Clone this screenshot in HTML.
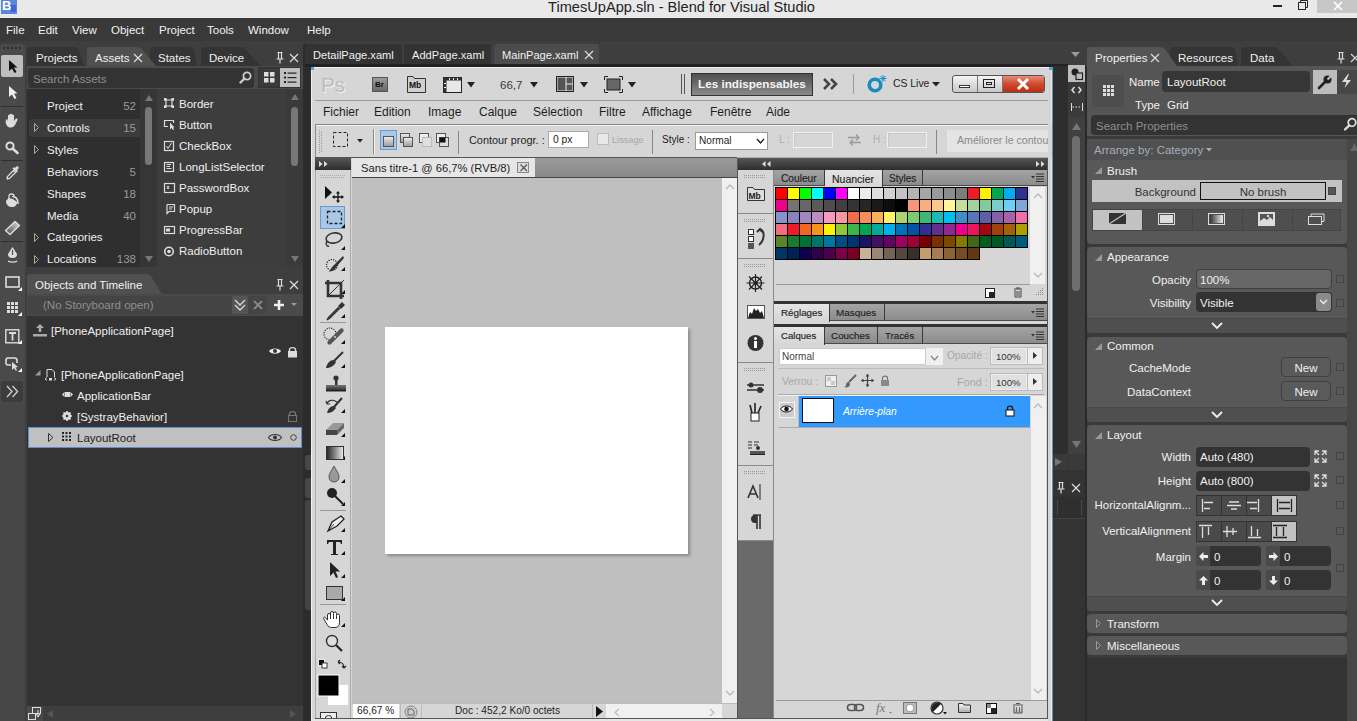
<!DOCTYPE html>
<html><head><meta charset="utf-8">
<style>
*{margin:0;padding:0;box-sizing:border-box}
html,body{width:1357px;height:721px;overflow:hidden;background:#3e3e3e;font-family:"Liberation Sans",sans-serif;position:relative}
.a{position:absolute}
.t{position:absolute;white-space:nowrap;line-height:12px;font-size:11.5px;color:#f0f0f0}
.mi{font-size:11.5px;top:24px;color:#f2f2f2}
svg{position:absolute;overflow:visible}
.ps{font-size:11px;color:#1e1e1e;line-height:12px}
.cat{left:47px}
.num{right:1221px;color:#9a9a9a;text-align:right}
.itm{left:179px}
.plab{text-align:right;right:166px}
</style></head><body>
<!-- ============ TITLE BAR ============ -->
<div class="a" style="left:0;top:0;width:1357px;height:18px;background:#e9e9e9"></div>
<div class="a" style="left:1px;top:0;width:16px;height:14px;background:#5a86e0"></div>
<div class="t" style="left:2px;top:0px;font-size:13px;font-weight:bold;color:#fff">B</div>
<div class="a" style="left:11px;top:5px;width:5px;height:7px;background:#3d6ad0"></div>
<div class="t" style="left:0;width:1363px;text-align:center;top:0px;font-size:14.6px;line-height:14px;color:#222">TimesUpApp.sln - Blend for Visual Studio</div>
<div class="a" style="left:1273px;top:5px;width:9px;height:2px;background:#222"></div>
<svg style="left:1298px;top:0" width="12" height="10"><rect x="0.5" y="2.5" width="7" height="7" fill="none" stroke="#222"/><path d="M2.5 2.5V0.5H9.5V7.5H7.5" fill="none" stroke="#222"/></svg>
<div class="a" style="left:1317px;top:0;width:40px;height:13px;background:#c7c7c7"></div>
<svg style="left:1333px;top:1px" width="10" height="10"><path d="M1 1L9 9M9 1L1 9" stroke="#fff" stroke-width="1.6"/></svg>

<!-- ============ MENU ============ -->
<div class="a" style="left:0;top:18px;width:1357px;height:23px;background:#393939"></div>
<div class="t mi" style="left:6px">File</div>
<div class="t mi" style="left:38px">Edit</div>
<div class="t mi" style="left:72px">View</div>
<div class="t mi" style="left:111px">Object</div>
<div class="t mi" style="left:159px">Project</div>
<div class="t mi" style="left:207px">Tools</div>
<div class="t mi" style="left:248px">Window</div>
<div class="t mi" style="left:307px">Help</div>

<!-- ============ LEFT TOOLBAR ============ -->
<div class="a" style="left:0;top:44px;width:25px;height:677px;background:#4a4a4a;border-radius:3px 3px 0 0"></div>
<svg style="left:3px;top:47px" width="20" height="3"><g fill="#2e2e2e"><rect x="0" y="0" width="2" height="2"/><rect x="4" y="0" width="2" height="2"/><rect x="8" y="0" width="2" height="2"/><rect x="12" y="0" width="2" height="2"/><rect x="16" y="0" width="2" height="2"/></g></svg>
<div class="a" style="left:1px;top:55px;width:22px;height:22px;background:#bdbdbd;border-radius:2px"></div>
<svg style="left:9px;top:60px" width="9" height="14"><path d="M0 0L0 11L3 8.5L5.5 13L7.5 12L5 7.5L8.5 7.5Z" fill="#111"/></svg>
<svg style="left:9px;top:86px" width="9" height="14"><path d="M0 0L0 11L3 8.5L5.5 13L7.5 12L5 7.5L8.5 7.5Z" fill="#eee"/></svg>
<div class="a" style="left:1px;top:106px;width:22px;height:1px;background:#303030"></div>
<svg style="left:5px;top:113px" width="15" height="15"><path d="M3 14C1 12 0 9 1 7L2 5.5L3 8V2.5C3 1.5 4.5 1.5 4.5 2.5V7V1.5C4.5 0.5 6 0.5 6 1.5V7V1.5C6 0.5 7.5 0.5 7.5 1.5V7V2.5C7.5 1.5 9 1.5 9 2.5V8L10.5 6C11.5 5 13 6 12.5 7L10 12C9 14 7 14.5 5 14.5Z" fill="#ddd"/></svg>
<svg style="left:5px;top:141px" width="14" height="13"><circle cx="5" cy="5" r="3.6" fill="none" stroke="#ddd" stroke-width="2"/><path d="M7.5 7.5L12.5 12" stroke="#ddd" stroke-width="2.6" stroke-linecap="round"/></svg>
<div class="a" style="left:1px;top:160px;width:22px;height:1px;background:#303030"></div>
<svg style="left:6px;top:166px" width="14" height="14"><path d="M10.5 0.5C11.5 -0.5 13.5 1.5 12.5 2.5L11 4L12 5L10.5 6.5L6.5 2.5L8 1L9 2Z" fill="#ddd"/><path d="M7.5 4.5L9.5 6.5L3.5 12.5L1.5 13L1 12.5L1.5 10.5Z" fill="none" stroke="#ddd" stroke-width="1.3"/></svg>
<svg style="left:5px;top:193px" width="15" height="16"><path d="M1 8C1 12 4 14 7 14C10 14 12 12 12 9L8 6L3.5 5Z" fill="#ddd"/><path d="M4 8V3C4 1.5 5 1 6.5 1C8 1 9 1.5 9 3" fill="none" stroke="#ddd" stroke-width="1.3"/><path d="M7 4C9 3 11.5 4.5 12.5 7L13 11" fill="none" stroke="#ddd" stroke-width="1.6"/><path d="M6 3.5L10 6.5" stroke="#4a4a4a" stroke-width="1"/></svg>
<svg style="left:4px;top:220px" width="17" height="16"><defs><linearGradient id="er" x1="0" y1="1" x2="1" y2="0"><stop offset="0" stop-color="#444"/><stop offset="1" stop-color="#ddd"/></linearGradient></defs><path d="M11 1.5L15.5 5.5L6 14.5L1.5 10.5Z" fill="url(#er)" stroke="#ddd" stroke-width="1.4" stroke-linejoin="round"/></svg>
<div class="a" style="left:1px;top:241px;width:22px;height:1px;background:#303030"></div>
<svg style="left:7px;top:247px" width="11" height="17"><path d="M5.5 0L10 7C10 10 8 11 5.5 11C3 11 1 10 1 7Z" fill="#ddd"/><path d="M5.5 3V8" stroke="#4a4a4a" stroke-width="1.2"/><path d="M1 14C3 15.5 8 15.5 10 14" fill="none" stroke="#ddd" stroke-width="1.2"/></svg>
<svg style="left:5px;top:276px" width="18" height="16"><rect x="1" y="1" width="13" height="10" fill="none" stroke="#ddd" stroke-width="1.6"/><path d="M17 11L17 15L13 15Z" fill="#fff"/></svg>
<svg style="left:7px;top:302px" width="16" height="16"><g fill="#ddd"><rect x="0" y="0" width="3" height="3"/><rect x="4" y="0" width="3" height="3"/><rect x="8" y="0" width="3" height="3"/><rect x="0" y="4" width="3" height="3"/><rect x="4" y="4" width="3" height="3"/><rect x="8" y="4" width="3" height="3"/><rect x="0" y="8" width="3" height="3"/><rect x="4" y="8" width="3" height="3"/><rect x="8" y="8" width="3" height="3"/></g><path d="M15 10L15 14L11 14Z" fill="#fff"/></svg>
<svg style="left:5px;top:329px" width="18" height="16"><rect x="0.8" y="0.8" width="13" height="13" fill="none" stroke="#ddd" stroke-width="1.4"/><path d="M4 4H11M7.5 4V11.5" stroke="#ddd" stroke-width="1.8"/><path d="M17 11L17 15L13 15Z" fill="#fff"/></svg>
<svg style="left:5px;top:357px" width="18" height="16"><path d="M12 6V3.5C12 2 11 1 9.5 1H3C1.8 1 1 2 1 3.5V6C1 7.5 1.8 8 3 8H6" fill="none" stroke="#ddd" stroke-width="1.6"/><path d="M7 5L7 13L9 11L11 14L12 13L10.5 10.5L13 10Z" fill="#ddd"/><path d="M17 11L17 15L13 15Z" fill="#fff"/></svg>
<div class="a" style="left:1px;top:381px;width:22px;height:21px;background:#3c3c3c;border-radius:2px"></div>
<svg style="left:6px;top:385px" width="14" height="13"><path d="M1 1L6 6.5L1 12M6.5 1L11.5 6.5L6.5 12" fill="none" stroke="#ccc" stroke-width="1.4"/></svg>
<div class="a" style="left:0;top:403px;width:25px;height:318px;background:#474747"></div>

<!-- ============ ASSETS PANEL ============ -->
<!-- tabs -->
<svg style="left:27px;top:47px" width="250" height="20"><path d="M0 20V3Q0 0 3 0H45Q49 0 51 2L57 18Q59 20 62 20Z" fill="#343434"/><path d="M123 20V3Q123 0 126 0H161Q165 0 167 2L170 18Q172 20 175 20Z" fill="#343434"/><path d="M174 20V3Q174 0 177 0H212Q216 0 218 2L233 18Q235 20 238 20Z" fill="#343434"/><path d="M60 20V3Q60 0 63 0H109Q113 0 115 2L128 18Q130 20 133 20Z" fill="#505050"/></svg>
<div class="a" style="left:27px;top:66px;width:276px;height:201px;background:#4a4a4a"></div>
<div class="t" style="left:36px;top:52px">Projects</div>
<div class="t" style="left:95px;top:52px">Assets</div>
<svg style="left:133px;top:53px" width="10" height="10"><path d="M1 1L9 9M9 1L1 9" stroke="#ddd" stroke-width="1.2"/></svg>
<div class="t" style="left:158px;top:52px">States</div>
<div class="t" style="left:209px;top:52px">Device</div>
<svg style="left:276px;top:52px" width="8" height="12"><path d="M1.5 0.5H6.5M2.5 0.5V7M5.5 0.5V7M0.5 7H7.5M4 7V11.5" stroke="#ddd" stroke-width="1.2" fill="none"/></svg>
<svg style="left:289px;top:53px" width="10" height="10"><path d="M1 1L9 9M9 1L1 9" stroke="#ddd" stroke-width="1.2"/></svg>
<div class="a" style="left:28px;top:68px;width:226px;height:20px;background:#333;border-radius:3px"></div>
<div class="t" style="left:33px;top:73px;color:#8e8e8e">Search Assets</div>
<svg style="left:239px;top:71px" width="13" height="13"><circle cx="8" cy="5" r="3.6" fill="none" stroke="#ccc" stroke-width="1.8"/><path d="M5.5 7.5L1.5 11.5" stroke="#ccc" stroke-width="2.4" stroke-linecap="round"/></svg>
<div class="a" style="left:258px;top:67px;width:43px;height:21px;background:#3a3a3a;border:1px solid #333"></div>
<div class="a" style="left:280px;top:68px;width:20px;height:19px;background:#c0c0c0"></div>
<svg style="left:264px;top:72px" width="12" height="12"><g fill="#ddd"><rect x="0" y="0" width="4.5" height="4.5"/><rect x="6" y="0" width="4.5" height="4.5"/><rect x="0" y="6" width="4.5" height="4.5"/><rect x="6" y="6" width="4.5" height="4.5"/></g></svg>
<svg style="left:284px;top:72px" width="13" height="12"><g fill="#222"><rect x="0" y="0" width="2" height="2"/><rect x="0" y="4.5" width="2" height="2"/><rect x="0" y="9" width="2" height="2"/><rect x="3.5" y="0.5" width="9" height="1.2"/><rect x="3.5" y="5" width="9" height="1.2"/><rect x="3.5" y="9.5" width="9" height="1.2"/></g></svg>
<!-- lists -->
<div class="a" style="left:27px;top:89px;width:113px;height:178px;background:#2f2f2f"></div>
<div class="a" style="left:140px;top:89px;width:17px;height:178px;background:#363636"></div>
<div class="a" style="left:157px;top:89px;width:146px;height:178px;background:#3d3d3d"></div>
<div class="a" style="left:286px;top:89px;width:17px;height:178px;background:#3a3a3a"></div>
<div class="a" style="left:29px;top:119px;width:111px;height:18px;background:#3c3c3c;border-radius:3px 0 0 3px"></div>
<svg style="left:145px;top:95px" width="8" height="7"><path d="M0 6L4 0L8 6Z" fill="#777"/></svg>
<div class="a" style="left:145px;top:107px;width:7px;height:58px;background:#777;border-radius:4px"></div>
<svg style="left:145px;top:256px" width="8" height="7"><path d="M0 0L4 6L8 0Z" fill="#777"/></svg>
<svg style="left:291px;top:94px" width="8" height="7"><path d="M0 6L4 0L8 6Z" fill="#777"/></svg>
<div class="a" style="left:291px;top:107px;width:7px;height:59px;background:#777;border-radius:4px"></div>
<svg style="left:291px;top:256px" width="8" height="7"><path d="M0 0L4 6L8 0Z" fill="#777"/></svg>
<div class="t cat" style="top:100px">Project</div><div class="t num" style="top:100px">52</div>
<div class="t cat" style="top:122px">Controls</div><div class="t num" style="top:122px">15</div>
<div class="t cat" style="top:144px">Styles</div>
<div class="t cat" style="top:166px">Behaviors</div><div class="t num" style="top:166px">5</div>
<div class="t cat" style="top:188px">Shapes</div><div class="t num" style="top:188px">18</div>
<div class="t cat" style="top:210px">Media</div><div class="t num" style="top:210px">40</div>
<div class="t cat" style="top:231px">Categories</div>
<div class="t cat" style="top:253px">Locations</div><div class="t num" style="top:253px">138</div>
<svg style="left:34px;top:0" width="6" height="270"><g fill="none" stroke="#aaa" stroke-width="1"><path d="M0.5 123.5V131.5L4.5 127.5Z"/><path d="M0.5 145.5V153.5L4.5 149.5Z"/><path d="M0.5 233.5V241.5L4.5 237.5Z"/><path d="M0.5 255.5V263.5L4.5 259.5Z"/></g></svg>
<div class="t itm" style="top:98px">Border</div>
<div class="t itm" style="top:119px">Button</div>
<div class="t itm" style="top:140px">CheckBox</div>
<div class="t itm" style="top:161px">LongListSelector</div>
<div class="t itm" style="top:182px">PasswordBox</div>
<div class="t itm" style="top:203px">Popup</div>
<div class="t itm" style="top:224px">ProgressBar</div>
<div class="t itm" style="top:245px">RadioButton</div>
<svg style="left:164px;top:98px" width="12" height="160" fill="none" stroke="#ddd" stroke-width="1.2">
<path d="M2 1V9M8 1V9M0 2H10M0 8H10"/><rect x="0" y="0" width="2.5" height="2.5" fill="#ddd" stroke="none"/><rect x="7.5" y="0" width="2.5" height="2.5" fill="#ddd" stroke="none"/><rect x="0" y="7.5" width="2.5" height="2.5" fill="#ddd" stroke="none"/><rect x="7.5" y="7.5" width="2.5" height="2.5" fill="#ddd" stroke="none"/>
<path d="M4 28.5H0.5V22.5H9.5V25"/><path d="M6 24.5V31.5L7.5 30L9 32L10 31.5L9 29.5L10.5 29.5Z" fill="#ddd" stroke="none"/>
<rect x="0.5" y="43.5" width="9" height="9"/><path d="M2.5 48L4 50.5L7.5 45" stroke-width="1"/>
<rect x="0.5" y="64.5" width="9" height="9"/><path d="M2.5 66.5H7M2.5 68.5H6M2.5 70.5H7.5" stroke-width="1"/>
<rect x="0.5" y="85.5" width="10" height="9"/><path d="M3 88L5 91M5 88L3 91" stroke-width="1"/>
<path d="M3 106.5H10.5V113.5H5L3 115.5V106.5" /><path d="M5 109H9M5 111H8" stroke-width="1"/>
<rect x="0.5" y="128.5" width="10" height="7"/><rect x="2" y="130.5" width="4" height="3" fill="#ddd" stroke="none"/>
<circle cx="5" cy="153.5" r="4.3" stroke-width="1.6"/><circle cx="5" cy="153.5" r="1.8" fill="#ddd" stroke="none"/>
</svg>

<!-- ============ OBJECTS AND TIMELINE ============ -->
<svg style="left:27px;top:274px" width="276" height="21"><path d="M0 21V3Q0 0 3 0H118Q122 0 124 2L134 19Q136 21 139 21Z" fill="#505050"/></svg>
<div class="t" style="left:35px;top:279px">Objects and Timeline</div>
<svg style="left:276px;top:279px" width="8" height="12"><path d="M1.5 0.5H6.5M2.5 0.5V7M5.5 0.5V7M0.5 7H7.5M4 7V11.5" stroke="#ddd" stroke-width="1.2" fill="none"/></svg>
<svg style="left:289px;top:280px" width="10" height="10"><path d="M1 1L9 9M9 1L1 9" stroke="#ddd" stroke-width="1.2"/></svg>
<div class="a" style="left:27px;top:294px;width:276px;height:22px;background:#4a4a4a"></div>
<div class="a" style="left:28px;top:296px;width:222px;height:19px;background:#444;border-radius:3px"></div>
<div class="t" style="left:43px;top:299px;color:#8e8e8e">(No Storyboard open)</div>
<div class="a" style="left:232px;top:296px;width:16px;height:18px;background:#555;border-radius:2px"></div>
<svg style="left:234px;top:299px" width="12" height="12"><path d="M1 1L6 6L11 1M1 6L6 11L11 6" fill="none" stroke="#ddd" stroke-width="1.3"/></svg>
<div class="a" style="left:249px;top:296px;width:17px;height:18px;background:#444;border-radius:2px"></div>
<svg style="left:253px;top:300px" width="10" height="10"><path d="M1 1L9 9M9 1L1 9" stroke="#888" stroke-width="1.8"/></svg>
<svg style="left:274px;top:300px" width="11" height="11"><path d="M5 0V10M0 5H10" stroke="#eee" stroke-width="2.6"/></svg>
<svg style="left:291px;top:303px" width="6" height="4"><path d="M0 0H6L3 3Z" fill="#999"/></svg>
<div class="a" style="left:27px;top:316px;width:276px;height:390px;background:#333"></div>
<svg style="left:33px;top:324px" width="14" height="13"><path d="M7 0L11 4H8.3V8H5.7V4H3Z" fill="#aaa"/><rect x="0" y="10" width="14" height="2.5" fill="#aaa"/></svg>
<div class="t" style="left:51px;top:325px">[PhoneApplicationPage]</div>
<svg style="left:269px;top:347px" width="12" height="8"><path d="M0 4C2 0.5 10 0.5 12 4C10 7.5 2 7.5 0 4Z" fill="#eee"/><circle cx="6" cy="4" r="2" fill="#333"/></svg>
<svg style="left:287px;top:346px" width="11" height="12"><path d="M2.5 5V3.5C2.5 1 8.5 1 8.5 3.5V5" fill="none" stroke="#ddd" stroke-width="1.4"/><rect x="1" y="5" width="9" height="6.5" fill="#ddd"/></svg>
<svg style="left:35px;top:370px" width="6" height="6"><path d="M5.5 0V5.5H0Z" fill="#999"/></svg>
<svg style="left:45px;top:369px" width="12" height="13"><path d="M2 8V0.5H7L9.5 3V8" fill="none" stroke="#ddd" stroke-width="1"/><path d="M0 10L2 8.5M0 10L2 11.5M11 10L9 8.5M11 10L9 11.5" stroke="#ddd" stroke-width="0.9"/><rect x="4" y="9" width="3" height="2.5" fill="#ddd"/></svg>
<div class="t" style="left:61px;top:369px">[PhoneApplicationPage]</div>
<svg style="left:62px;top:391px" width="11" height="7"><path d="M0 3.5L2 1.5V5.5Z" fill="#ddd"/><rect x="2.5" y="1" width="6" height="5" fill="#ddd"/><path d="M11 3.5L9 1.5V5.5Z" fill="#ddd"/></svg>
<div class="t" style="left:77px;top:390px">ApplicationBar</div>
<svg style="left:62px;top:411px" width="10" height="10"><circle cx="5" cy="5" r="3" fill="none" stroke="#ddd" stroke-width="2"/><path d="M5 0V10M0 5H10M1.5 1.5L8.5 8.5M8.5 1.5L1.5 8.5" stroke="#ddd" stroke-width="1.6"/><circle cx="5" cy="5" r="1.3" fill="#333"/></svg>
<div class="t" style="left:77px;top:411px">[SystrayBehavior]</div>
<svg style="left:287px;top:410px" width="11" height="12"><path d="M2.5 5V3.5C2.5 1 8.5 1 8.5 3.5V5" fill="none" stroke="#777" stroke-width="1.2"/><rect x="1.5" y="5.5" width="8" height="6" fill="none" stroke="#777"/></svg>
<div class="a" style="left:28px;top:427px;width:274px;height:21px;background:#c0c0c0;border:1px solid #5b8ad6"></div>
<svg style="left:48px;top:433px" width="6" height="10"><path d="M0.5 0.5V8.5L5 4.5Z" fill="none" stroke="#333"/></svg>
<svg style="left:62px;top:432px" width="9" height="9"><g fill="#222"><rect x="0" y="0" width="2" height="2"/><rect x="3.5" y="0" width="2" height="2"/><rect x="7" y="0" width="2" height="2"/><rect x="0" y="3.5" width="2" height="2"/><rect x="3.5" y="3.5" width="2" height="2"/><rect x="7" y="3.5" width="2" height="2"/><rect x="0" y="7" width="2" height="2"/><rect x="3.5" y="7" width="2" height="2"/><rect x="7" y="7" width="2" height="2"/></g></svg>
<div class="t" style="left:77px;top:432px;color:#222">LayoutRoot</div>
<svg style="left:268px;top:433px" width="14" height="9"><path d="M0.5 4.5C3 0.5 11 0.5 13.5 4.5C11 8.5 3 8.5 0.5 4.5Z" fill="none" stroke="#333" stroke-width="1.1"/><circle cx="7" cy="4.5" r="2" fill="#333"/></svg>
<svg style="left:290px;top:434px" width="7" height="7"><circle cx="3.5" cy="3.5" r="2.8" fill="none" stroke="#444"/></svg>
<!-- bottom scroll -->
<div class="a" style="left:27px;top:706px;width:276px;height:15px;background:#3e3e3e"></div>
<div class="a" style="left:27px;top:706px;width:16px;height:15px;background:#4a4a4a"></div>
<svg style="left:28px;top:707px" width="14" height="13"><rect x="4.5" y="0.5" width="8" height="6" fill="none" stroke="#ddd"/><rect x="0.5" y="6.5" width="7" height="6" fill="#4a4a4a" stroke="#ddd"/><path d="M10 3V9M8 7L10 10L12 7" stroke="#ddd" fill="none"/></svg>
<svg style="left:47px;top:710px" width="6" height="8"><path d="M6 0V8L0 4Z" fill="#555"/></svg>
<svg style="left:290px;top:710px" width="6" height="8"><path d="M0 0V8L6 4Z" fill="#555"/></svg>
<div class="a" style="left:303px;top:44px;width:8px;height:677px;background:#2c2c2c"></div>
<div class="a" style="left:305px;top:455px;width:6px;height:15px;background:#474747;border-radius:3px 0 0 3px"></div><div class="a" style="left:305px;top:478px;width:6px;height:20px;background:#474747;border-radius:3px 0 0 3px"></div><div class="a" style="left:305px;top:500px;width:6px;height:110px;background:#444;border-radius:3px 0 0 3px"></div>

<!-- ============ DOC TABS ============ -->
<div class="a" style="left:305px;top:44px;width:160px;height:20px;background:#333;border-radius:3px 3px 0 0;width:97px"></div>
<div class="a" style="left:404px;top:44px;width:87px;height:20px;background:#333;border-radius:3px 3px 0 0"></div>
<div class="a" style="left:494px;top:44px;width:105px;height:21px;background:#4c4c4c;border-radius:3px 3px 0 0"></div>
<div class="t" style="left:313px;top:49px;font-size:11.1px">DetailPage.xaml</div>
<div class="t" style="left:412px;top:49px;font-size:11.1px">AddPage.xaml</div>
<div class="t" style="left:502px;top:49px;font-size:11.1px">MainPage.xaml</div>
<svg style="left:584px;top:50px" width="10" height="10"><path d="M1 1L9 9M9 1L1 9" stroke="#ddd" stroke-width="1.2"/></svg>
<div class="a" style="left:305px;top:64px;width:763px;height:3px;background:#222"></div>
<svg style="left:1071px;top:52px" width="9" height="6"><path d="M0 0H9L4.5 5Z" fill="#999"/></svg>

<!-- ============ RIGHT STRIP ============ -->
<div class="a" style="left:1052px;top:66px;width:16px;height:388px;background:#2e2e2e"></div>
<div class="a" style="left:1068px;top:66px;width:18px;height:388px;background:#3a3a3a"></div>
<div class="a" style="left:1068px;top:65px;width:17px;height:17px;background:#bdbdbd"></div>
<svg style="left:1071px;top:68px" width="12" height="12"><circle cx="4" cy="4" r="3.5" fill="#222"/><rect x="5" y="5" width="6.5" height="6.5" fill="#bdbdbd" stroke="#222" stroke-width="1.2"/></svg>
<svg style="left:1071px;top:86px" width="11" height="8"><path d="M3.5 1L1 4L3.5 7M7.5 1L10 4L7.5 7" fill="none" stroke="#ddd" stroke-width="1.5"/></svg>
<svg style="left:1071px;top:103px" width="12" height="8"><path d="M1.5 4H10.5" stroke="#ddd" stroke-width="1" stroke-dasharray="1.5 1.5"/><path d="M0.5 0V8M11.5 0V8" stroke="#ddd" stroke-width="1"/></svg>
<div class="a" style="left:1068px;top:117px;width:18px;height:337px;background:#404040"></div>
<svg style="left:1072px;top:123px" width="9" height="7"><path d="M0 7L4.5 0L9 7Z" fill="#777"/></svg>
<div class="a" style="left:1072px;top:136px;width:8px;height:155px;background:#6e6e6e;border-radius:4px"></div>
<svg style="left:1072px;top:441px" width="9" height="7"><path d="M0 0L4.5 7L9 0Z" fill="#777"/></svg>
<div class="a" style="left:1052px;top:454px;width:34px;height:16px;background:#3a3a3a"></div>
<svg style="left:1055px;top:458px" width="7" height="8"><path d="M0 0V8L7 4Z" fill="#777"/></svg>
<div class="a" style="left:1068px;top:454px;width:1px;height:16px;background:#333"></div>
<div class="a" style="left:1052px;top:470px;width:34px;height:251px;background:#333"></div>
<svg style="left:1057px;top:482px" width="8" height="12"><path d="M1.5 0.5H6.5M2.5 0.5V7M5.5 0.5V7M0.5 7H7.5M4 7V11.5" stroke="#ddd" stroke-width="1.2" fill="none"/></svg>
<svg style="left:1071px;top:483px" width="10" height="10"><path d="M1 1L9 9M9 1L1 9" stroke="#ddd" stroke-width="1.2"/></svg>
<div class="a" style="left:1053px;top:497px;width:32px;height:22px;background:#2f2f2f;border-bottom:1px solid #444"></div>
<div class="a" style="left:1057px;top:500px;width:1px;height:15px;background:#484848"></div>
<div class="a" style="left:1081px;top:500px;width:1px;height:15px;background:#484848"></div>
<div class="a" style="left:1085px;top:66px;width:2px;height:655px;background:#2a2a2a"></div>

<!-- ============ PROPERTIES PANEL ============ -->
<svg style="left:1087px;top:47px" width="270" height="20"><path d="M83 20V3Q83 0 86 0H142Q146 0 148 2L151 18Q153 20 156 20Z" fill="#343434"/><path d="M154 20V3Q154 0 157 0H185Q189 0 191 2L205 18Q207 20 210 20Z" fill="#343434"/><path d="M0 20V3Q0 0 3 0H72Q76 0 78 2L89 18Q91 20 94 20Z" fill="#555"/></svg>
<div class="a" style="left:1087px;top:66px;width:270px;height:74px;background:#555"></div>
<div class="t" style="left:1095px;top:52px">Properties</div>
<svg style="left:1150px;top:53px" width="10" height="10"><path d="M1 1L9 9M9 1L1 9" stroke="#ddd" stroke-width="1.2"/></svg>
<div class="t" style="left:1178px;top:52px">Resources</div>
<div class="t" style="left:1250px;top:52px">Data</div>
<svg style="left:1337px;top:52px" width="8" height="12"><path d="M1.5 0.5H6.5M2.5 0.5V7M5.5 0.5V7M0.5 7H7.5M4 7V11.5" stroke="#ddd" stroke-width="1.2" fill="none"/></svg>
<svg style="left:1350px;top:53px" width="10" height="10"><path d="M1 1L9 9M9 1L1 9" stroke="#ddd" stroke-width="1.2"/></svg>
<div class="a" style="left:1092px;top:75px;width:32px;height:32px;background:#4d4d4d"></div>
<svg style="left:1103px;top:85px" width="11" height="11"><g fill="#ddd"><rect x="0" y="0" width="3" height="3"/><rect x="4" y="0" width="3" height="3"/><rect x="8" y="0" width="3" height="3"/><rect x="0" y="4" width="3" height="3"/><rect x="4" y="4" width="3" height="3"/><rect x="8" y="4" width="3" height="3"/><rect x="0" y="8" width="3" height="3"/><rect x="4" y="8" width="3" height="3"/><rect x="8" y="8" width="3" height="3"/></g></svg>
<div class="t" style="left:1129px;top:76px">Name</div>
<div class="a" style="left:1162px;top:71px;width:148px;height:21px;background:#363636;border-radius:4px"></div>
<div class="t" style="left:1167px;top:76px">LayoutRoot</div>
<div class="a" style="left:1313px;top:70px;width:24px;height:24px;background:#bdbdbd"></div>
<svg style="left:1317px;top:74px" width="16" height="16"><path d="M2 14L8 8" stroke="#222" stroke-width="2.6" stroke-linecap="round"/><circle cx="10.5" cy="5.5" r="4" fill="#222"/><path d="M10.5 5.5L14 2" stroke="#bdbdbd" stroke-width="2.2"/></svg>
<div class="a" style="left:1337px;top:70px;width:20px;height:24px;background:#474747"></div>
<svg style="left:1341px;top:74px" width="12" height="15"><path d="M7 0L1 8H5.5L3.5 14L10 6H5.5L8 0Z" fill="#ddd"/></svg>
<div class="t" style="left:1135px;top:99px">Type</div>
<div class="t" style="left:1167px;top:99px">Grid</div>
<div class="a" style="left:1091px;top:115px;width:266px;height:20px;background:#333;border-radius:4px 0 0 4px"></div>
<div class="t" style="left:1096px;top:120px;color:#8e8e8e">Search Properties</div>
<svg style="left:1343px;top:117px" width="14" height="14"><circle cx="9" cy="5.5" r="3.8" fill="none" stroke="#ddd" stroke-width="1.8"/><path d="M6.3 8.3L2 12.5" stroke="#ddd" stroke-width="2.4" stroke-linecap="round"/></svg>
<div class="a" style="left:1087px;top:136px;width:270px;height:585px;background:#3a3a3a"></div>
<div class="a" style="left:1347px;top:139px;width:10px;height:582px;background:#474747"></div>
<svg style="left:1350px;top:143px" width="9" height="8"><path d="M0 8L4.5 0L9 8Z" fill="#666"/></svg>
<div class="a" style="left:1087px;top:139px;width:260px;height:21px;background:#505050"></div>
<div class="t" style="left:1094px;top:144px;color:#a5adb8">Arrange by: Category</div>
<svg style="left:1206px;top:148px" width="6" height="4"><path d="M0 0H6L3 3.5Z" fill="#a5adb8"/></svg>

<!-- Brush -->
<div class="a" style="left:1087px;top:160px;width:260px;height:84px;background:#585858;border-radius:0 0 4px 4px"></div>
<svg style="left:1095px;top:167px" width="8" height="8"><path d="M7 0V7H0Z" fill="#999"/></svg>
<div class="t" style="left:1107px;top:165px">Brush</div>
<div class="a" style="left:1092px;top:180px;width:250px;height:22px;background:#c2c2c2"></div>
<div class="t plab" style="top:186px;color:#333;right:161px">Background</div>
<div class="a" style="left:1200px;top:182px;width:126px;height:18px;border:1px solid #111"></div>
<div class="t" style="left:1200px;width:126px;text-align:center;top:186px;color:#333">No brush</div>
<div class="a" style="left:1328px;top:187px;width:8px;height:8px;background:#555;border:1px solid #444"></div>
<div class="a" style="left:1092px;top:209px;width:249px;height:22px;background:#4f4f4f;border:1px solid #444"></div>
<div class="a" style="left:1093px;top:210px;width:49px;height:20px;background:#c2c2c2"></div>
<div class="a" style="left:1142px;top:210px;width:1px;height:20px;background:#444"></div>
<div class="a" style="left:1192px;top:210px;width:1px;height:20px;background:#444"></div>
<div class="a" style="left:1242px;top:210px;width:1px;height:20px;background:#444"></div>
<div class="a" style="left:1292px;top:210px;width:1px;height:20px;background:#444"></div>
<svg style="left:1109px;top:213px" width="17" height="11"><rect x="0" y="0" width="17" height="11" fill="#333"/><path d="M0 11L17 0" stroke="#c2c2c2" stroke-width="1.3"/></svg>
<svg style="left:1158px;top:213px" width="17" height="12"><rect x="0.5" y="0.5" width="16" height="11" fill="none" stroke="#ddd"/><rect x="2" y="2" width="13" height="8" fill="#ddd"/></svg>
<svg style="left:1208px;top:213px" width="17" height="12"><defs><linearGradient id="g1"><stop offset="0" stop-color="#333"/><stop offset="1" stop-color="#eee"/></linearGradient></defs><rect x="0.5" y="0.5" width="16" height="11" fill="none" stroke="#ddd"/><rect x="2" y="2" width="13" height="8" fill="url(#g1)"/></svg>
<svg style="left:1258px;top:212px" width="17" height="14"><rect x="0" y="0" width="17" height="14" fill="#ddd"/><rect x="2" y="2" width="13" height="8" fill="#555"/><path d="M2 9L6 6L9 8L12 5L15 8V10H2Z" fill="#ddd"/><circle cx="10" cy="4" r="1.2" fill="#ddd"/></svg>
<svg style="left:1308px;top:213px" width="17" height="12"><rect x="0.5" y="3.5" width="13" height="8" fill="none" stroke="#ddd"/><path d="M3 3.5V1H16V8.5H13.5" fill="none" stroke="#ddd"/></svg>

<!-- Appearance -->
<div class="a" style="left:1087px;top:247px;width:260px;height:86px;background:#585858;border-radius:4px"></div>
<svg style="left:1095px;top:254px" width="8" height="8"><path d="M7 0V7H0Z" fill="#999"/></svg>
<div class="t" style="left:1107px;top:251px">Appearance</div>
<div class="t plab" style="top:274px">Opacity</div>
<div class="a" style="left:1196px;top:269px;width:136px;height:20px;background:#666;border:1px solid #3f3f3f;border-radius:4px"></div>
<div class="t" style="left:1200px;top:274px">100%</div>
<div class="a" style="left:1336px;top:275px;width:8px;height:8px;border:1px solid #444"></div>
<div class="t plab" style="top:297px">Visibility</div>
<div class="a" style="left:1196px;top:292px;width:136px;height:20px;background:#333;border-radius:4px"></div>
<div class="a" style="left:1316px;top:293px;width:15px;height:18px;background:#8a8a8a;border-radius:3px"></div>
<svg style="left:1319px;top:299px" width="9" height="6"><path d="M1 1L4.5 4.5L8 1" fill="none" stroke="#eee" stroke-width="1.4"/></svg>
<div class="t" style="left:1200px;top:297px">Visible</div>
<div class="a" style="left:1336px;top:299px;width:8px;height:8px;border:1px solid #444"></div>
<div class="a" style="left:1087px;top:318px;width:260px;height:15px;background:#4f4f4f;border-top:1px solid #484848;border-radius:0 0 4px 4px"></div>
<svg style="left:1211px;top:322px" width="12" height="8"><path d="M1 1L6 6L11 1" fill="none" stroke="#eee" stroke-width="1.8"/></svg>

<!-- Common -->
<div class="a" style="left:1087px;top:337px;width:260px;height:85px;background:#585858;border-radius:4px"></div>
<svg style="left:1095px;top:343px" width="8" height="8"><path d="M7 0V7H0Z" fill="#999"/></svg>
<div class="t" style="left:1107px;top:340px">Common</div>
<div class="t plab" style="top:362px">CacheMode</div>
<div class="a" style="left:1281px;top:357px;width:50px;height:20px;border:1px solid #3f3f3f;border-radius:4px;background:#5a5a5a"></div>
<div class="t" style="left:1281px;width:50px;text-align:center;top:362px">New</div>
<div class="a" style="left:1336px;top:363px;width:8px;height:8px;border:1px solid #444"></div>
<div class="t plab" style="top:386px">DataContext</div>
<div class="a" style="left:1281px;top:381px;width:50px;height:20px;border:1px solid #3f3f3f;border-radius:4px;background:#5a5a5a"></div>
<div class="t" style="left:1281px;width:50px;text-align:center;top:386px">New</div>
<div class="a" style="left:1336px;top:387px;width:8px;height:8px;border:1px solid #444"></div>
<div class="a" style="left:1087px;top:407px;width:260px;height:15px;background:#4f4f4f;border-top:1px solid #484848;border-radius:0 0 4px 4px"></div>
<svg style="left:1211px;top:411px" width="12" height="8"><path d="M1 1L6 6L11 1" fill="none" stroke="#eee" stroke-width="1.8"/></svg>

<!-- Layout -->
<div class="a" style="left:1087px;top:425px;width:260px;height:186px;background:#585858;border-radius:4px"></div>
<svg style="left:1095px;top:432px" width="8" height="8"><path d="M7 0V7H0Z" fill="#999"/></svg>
<div class="t" style="left:1107px;top:429px">Layout</div>
<div class="t plab" style="top:451px">Width</div>
<div class="a" style="left:1196px;top:447px;width:114px;height:20px;background:#333;border-radius:4px"></div>
<div class="t" style="left:1200px;top:451px">Auto (480)</div>
<svg style="left:1314px;top:450px" width="13" height="13"><path d="M1 5V1H5M1 1L5 5M12 8V12H8M12 12L8 8M8 1H12V5M12 1L8 5M5 12H1V8M1 12L5 8" fill="none" stroke="#ddd" stroke-width="1.3"/></svg>
<div class="a" style="left:1336px;top:452px;width:8px;height:8px;border:1px solid #444"></div>
<div class="t plab" style="top:475px">Height</div>
<div class="a" style="left:1196px;top:471px;width:114px;height:20px;background:#333;border-radius:4px"></div>
<div class="t" style="left:1200px;top:475px">Auto (800)</div>
<svg style="left:1314px;top:474px" width="13" height="13"><path d="M1 5V1H5M1 1L5 5M12 8V12H8M12 12L8 8M8 1H12V5M12 1L8 5M5 12H1V8M1 12L5 8" fill="none" stroke="#ddd" stroke-width="1.3"/></svg>
<div class="a" style="left:1336px;top:476px;width:8px;height:8px;border:1px solid #444"></div>
<div class="t plab" style="top:499px">HorizontalAlignm...</div>
<div class="a" style="left:1196px;top:495px;width:101px;height:21px;background:#4a4a4a;border:1px solid #333"></div>
<div class="a" style="left:1271px;top:496px;width:25px;height:19px;background:#c2c2c2"></div>
<div class="a" style="left:1221px;top:496px;width:1px;height:19px;background:#333"></div>
<div class="a" style="left:1246px;top:496px;width:1px;height:19px;background:#333"></div>
<div class="a" style="left:1271px;top:496px;width:1px;height:19px;background:#333"></div>
<svg style="left:1196px;top:495px" width="101" height="21" fill="none" stroke="#ddd" stroke-width="1.3">
<path d="M6.5 4V17M8 7.5H17M8 13.5H14"/>
<path d="M31 10.5H45M33 7H43M35 14H41"/>
<path d="M62.5 4V17M51 7.5H61M54 13.5H61"/>
<path d="M81.5 4V17M95.5 4V17M83 7.5H94M83 13.5H94" stroke="#222"/>
</svg>
<div class="a" style="left:1336px;top:501px;width:8px;height:8px;border:1px solid #444"></div>
<div class="t plab" style="top:525px">VerticalAlignment</div>
<div class="a" style="left:1196px;top:521px;width:101px;height:21px;background:#4a4a4a;border:1px solid #333"></div>
<div class="a" style="left:1271px;top:522px;width:25px;height:19px;background:#c2c2c2"></div>
<div class="a" style="left:1221px;top:522px;width:1px;height:19px;background:#333"></div>
<div class="a" style="left:1246px;top:522px;width:1px;height:19px;background:#333"></div>
<div class="a" style="left:1271px;top:522px;width:1px;height:19px;background:#333"></div>
<svg style="left:1196px;top:521px" width="101" height="21" fill="none" stroke="#ddd" stroke-width="1.3">
<path d="M3 4.5H16M6.5 6V17M12.5 6V14"/>
<path d="M27 10.5H41M31 5V16M37 7V14"/>
<path d="M52 16.5H65M55.5 5V15M61.5 8V15"/>
<path d="M77 4.5H91M77 16.5H91M80.5 6V15M87.5 6V15" stroke="#222"/>
</svg>
<div class="a" style="left:1336px;top:527px;width:8px;height:8px;border:1px solid #444"></div>
<div class="t plab" style="top:551px">Margin</div>
<div class="a" style="left:1196px;top:546px;width:65px;height:20px;background:#333;border-radius:4px"></div>
<div class="a" style="left:1266px;top:546px;width:65px;height:20px;background:#333;border-radius:4px"></div>
<div class="a" style="left:1196px;top:570px;width:65px;height:20px;background:#333;border-radius:4px"></div>
<div class="a" style="left:1266px;top:570px;width:65px;height:20px;background:#333;border-radius:4px"></div>
<div class="a" style="left:1196px;top:546px;width:14px;height:20px;background:#4a4a4a;border-radius:4px 0 0 4px"></div>
<div class="a" style="left:1266px;top:546px;width:14px;height:20px;background:#4a4a4a;border-radius:4px 0 0 4px"></div>
<div class="a" style="left:1196px;top:570px;width:14px;height:20px;background:#4a4a4a;border-radius:4px 0 0 4px"></div>
<div class="a" style="left:1266px;top:570px;width:14px;height:20px;background:#4a4a4a;border-radius:4px 0 0 4px"></div>
<svg style="left:1199px;top:552px" width="9" height="9"><path d="M0 4.5L4.5 0V3H9V6H4.5V9Z" fill="#eee"/></svg>
<svg style="left:1269px;top:552px" width="9" height="9"><path d="M9 4.5L4.5 0V3H0V6H4.5V9Z" fill="#eee"/></svg>
<svg style="left:1199px;top:576px" width="9" height="9"><path d="M4.5 0L0 4.5H3V9H6V4.5H9Z" fill="#eee"/></svg>
<svg style="left:1269px;top:576px" width="9" height="9"><path d="M4.5 9L0 4.5H3V0H6V4.5H9Z" fill="#eee"/></svg>
<div class="t" style="left:1214px;top:551px">0</div>
<div class="t" style="left:1284px;top:551px">0</div>
<div class="t" style="left:1214px;top:575px">0</div>
<div class="t" style="left:1284px;top:575px">0</div>
<div class="a" style="left:1336px;top:564px;width:8px;height:8px;border:1px solid #444"></div>
<div class="a" style="left:1087px;top:596px;width:260px;height:15px;background:#4f4f4f;border-top:1px solid #484848;border-radius:0 0 4px 4px"></div>
<svg style="left:1211px;top:599px" width="12" height="8"><path d="M1 1L6 6L11 1" fill="none" stroke="#eee" stroke-width="1.8"/></svg>

<div class="a" style="left:1087px;top:614px;width:260px;height:19px;background:#585858;border-radius:4px"></div>
<svg style="left:1096px;top:619px" width="6" height="10"><path d="M0.5 0.5V8.5L4.5 4.5Z" fill="none" stroke="#999"/></svg>
<div class="t" style="left:1107px;top:618px">Transform</div>
<div class="a" style="left:1087px;top:636px;width:260px;height:19px;background:#585858;border-radius:4px"></div>
<svg style="left:1096px;top:641px" width="6" height="10"><path d="M0.5 0.5V8.5L4.5 4.5Z" fill="none" stroke="#999"/></svg>
<div class="t" style="left:1107px;top:640px">Miscellaneous</div>
<div class="a" style="left:1087px;top:658px;width:260px;height:63px;background:#333"></div>


<!-- ============ PS WINDOW ============ -->
<div class="a" style="left:311px;top:67px;width:741px;height:654px;background:#d6d6d6;border-left:1px solid #f0f0f0;border-top:1px solid #f0f0f0;border-right:1px solid #e8e8e8"></div>
<div class="a" style="left:311px;top:67px;width:3px;height:3px;background:#5aa0d8"></div>
<div class="a" style="left:1049px;top:67px;width:3px;height:3px;background:#5aa0d8"></div>
<!-- app bar -->
<div class="t" style="left:321px;top:74px;font-size:21px;line-height:21px;color:#bcbcbc;letter-spacing:-0.5px;text-shadow:1px 1px 0 #f4f4f4">Ps</div>
<div class="a" style="left:372px;top:77px;width:16px;height:15px;background:linear-gradient(#9a9a9a,#6a6a6a);border:1px solid #555"></div>
<div class="t" style="left:375px;top:81px;font-size:8px;line-height:8px;color:#111;font-weight:bold">Br</div>
<svg style="left:407px;top:76px" width="19" height="17"><path d="M0.5 16.5V0.5H6L7.5 2.5H18.5V16.5Z" fill="#d0d0d0" stroke="#333"/></svg>
<div class="t" style="left:409px;top:81px;font-size:8.5px;line-height:8px;color:#111;font-weight:bold">Mb</div>
<svg style="left:443px;top:77px" width="20" height="16"><rect x="0.5" y="0.5" width="18" height="15" fill="#e8e8e8" stroke="#222"/><rect x="0.5" y="0.5" width="18" height="3" fill="#333"/><rect x="0.5" y="0.5" width="3" height="15" fill="#333"/><g fill="#eee"><rect x="6" y="1" width="1" height="2"/><rect x="10" y="1" width="1" height="2"/><rect x="14" y="1" width="1" height="2"/><rect x="1" y="6" width="2" height="1"/><rect x="1" y="10" width="2" height="1"/></g></svg>
<svg style="left:467px;top:82px" width="8" height="6"><path d="M0 0H8L4 5.5Z" fill="#222"/></svg>
<div class="t ps" style="left:500px;top:79px;font-size:11.5px;color:#3a3a3a">66,7</div>
<svg style="left:530px;top:82px" width="8" height="6"><path d="M0 0H8L4 5.5Z" fill="#222"/></svg>
<svg style="left:556px;top:76px" width="19" height="17"><rect x="0.5" y="0.5" width="17" height="15" fill="#eee" stroke="#222"/><rect x="1.5" y="1.5" width="8" height="13" fill="#555"/><rect x="10.5" y="1.5" width="6" height="6" fill="#555"/><rect x="10.5" y="8.5" width="6" height="6" fill="#555"/></svg>
<svg style="left:580px;top:82px" width="8" height="6"><path d="M0 0H8L4 5.5Z" fill="#222"/></svg>
<svg style="left:604px;top:76px" width="19" height="17"><path d="M0.5 4V0.5H4M15 0.5H18.5V4M18.5 13V16.5H15M4 16.5H0.5V13" fill="none" stroke="#222"/><rect x="3" y="3" width="13" height="11" fill="#666" stroke="#222"/></svg>
<svg style="left:628px;top:82px" width="8" height="6"><path d="M0 0H8L4 5.5Z" fill="#222"/></svg>
<div class="a" style="left:681px;top:74px;width:1px;height:20px;background:#555"></div>
<div class="a" style="left:684px;top:74px;width:1px;height:20px;background:#555"></div>
<div class="a" style="left:691px;top:73px;width:122px;height:23px;background:linear-gradient(#505050,#8a8a8a);border:1px solid #333"></div>
<div class="t" style="left:698px;top:78px;font-size:11.7px;font-weight:bold;color:#f5f5f5">Les indispensables</div>
<svg style="left:823px;top:78px" width="16" height="12"><path d="M1 1L6 6L1 11M8 1L13 6L8 11" fill="none" stroke="#444" stroke-width="2.6"/></svg>
<div class="a" style="left:853px;top:74px;width:1px;height:20px;background:#999"></div>
<svg style="left:867px;top:74px" width="22" height="19"><circle cx="8" cy="11" r="5.8" fill="none" stroke="#1a8cc0" stroke-width="3.6"/><circle cx="15.5" cy="5" r="2.6" fill="#d6d6d6"/><path d="M16 1V8M12.5 4.5H19.5M13.5 2L18.5 7M18.5 2L13.5 7" stroke="#1a8cc0" stroke-width="1"/></svg>
<div class="t ps" style="left:893px;top:78px;font-size:10.4px;color:#222">CS Live</div>
<svg style="left:932px;top:82px" width="8" height="5"><path d="M0 0H8L4 4.5Z" fill="#222"/></svg>
<div class="a" style="left:952px;top:75px;width:93px;height:18px;border:1px solid #555;border-radius:3px;background:linear-gradient(#f4f4f4,#c8c8c8)"></div>
<div class="a" style="left:977px;top:76px;width:1px;height:16px;background:#777"></div>
<div class="a" style="left:1002px;top:76px;width:42px;height:16px;background:linear-gradient(#e88a78 0%,#d04a2c 50%,#b83015 100%);border-left:1px solid #777;border-radius:0 2px 2px 0"></div>
<div class="a" style="left:959px;top:85px;width:11px;height:3px;background:#fff;border:1px solid #333"></div>
<div class="a" style="left:983px;top:79px;width:12px;height:9px;border:1.5px solid #222"></div>
<div class="a" style="left:986px;top:82px;width:6px;height:3px;border:1px solid #222"></div>
<svg style="left:1016px;top:78px" width="14" height="12"><path d="M2 1L12 11M12 1L2 11" stroke="#fff" stroke-width="3"/></svg>
<div class="a" style="left:315px;top:100px;width:733px;height:1px;background:#9a9a9a"></div>
<!-- menu -->
<div class="t ps" style="left:323px;top:106px;font-size:12px">Fichier</div>
<div class="t ps" style="left:374px;top:106px;font-size:12px">Edition</div>
<div class="t ps" style="left:428px;top:106px;font-size:12px">Image</div>
<div class="t ps" style="left:479px;top:106px;font-size:12px">Calque</div>
<div class="t ps" style="left:533px;top:106px;font-size:12px">Sélection</div>
<div class="t ps" style="left:599px;top:106px;font-size:12px">Filtre</div>
<div class="t ps" style="left:642px;top:106px;font-size:12px">Affichage</div>
<div class="t ps" style="left:710px;top:106px;font-size:12px">Fenêtre</div>
<div class="t ps" style="left:766px;top:106px;font-size:12px">Aide</div>
<!-- options bar -->
<div class="a" style="left:315px;top:124px;width:734px;height:34px;background:#d6d6d6;border:1px solid #8a8a8a;border-right:none;border-bottom:1px solid #b0b0b0"></div>
<div class="a" style="left:316px;top:125px;width:732px;height:1px;background:#f4f4f4"></div>
<svg style="left:319px;top:130px" width="3" height="24"><g fill="#999"><rect x="0" y="0" width="1" height="1"/><rect x="0" y="2" width="1" height="1"/><rect x="0" y="4" width="1" height="1"/><rect x="0" y="6" width="1" height="1"/><rect x="0" y="8" width="1" height="1"/><rect x="0" y="10" width="1" height="1"/><rect x="0" y="12" width="1" height="1"/><rect x="0" y="14" width="1" height="1"/><rect x="0" y="16" width="1" height="1"/><rect x="0" y="18" width="1" height="1"/><rect x="0" y="20" width="1" height="1"/><rect x="0" y="22" width="1" height="1"/><rect x="2" y="1" width="1" height="1"/><rect x="2" y="3" width="1" height="1"/><rect x="2" y="5" width="1" height="1"/><rect x="2" y="7" width="1" height="1"/><rect x="2" y="9" width="1" height="1"/><rect x="2" y="11" width="1" height="1"/><rect x="2" y="13" width="1" height="1"/><rect x="2" y="15" width="1" height="1"/><rect x="2" y="17" width="1" height="1"/><rect x="2" y="19" width="1" height="1"/><rect x="2" y="21" width="1" height="1"/></g></svg>
<svg style="left:333px;top:132px" width="15" height="15"><rect x="0.5" y="0.5" width="14" height="14" fill="none" stroke="#222" stroke-dasharray="3 2"/></svg>
<svg style="left:357px;top:139px" width="6" height="4"><path d="M0 0H6L3 3.5Z" fill="#222"/></svg>
<div class="a" style="left:373px;top:129px;width:1px;height:25px;background:#888"></div>
<div class="a" style="left:374px;top:129px;width:1px;height:25px;background:#f4f4f4"></div>
<div class="a" style="left:380px;top:130px;width:17px;height:20px;background:#a9c8e8;border:1px solid #6a9bd0"></div>
<svg style="left:383px;top:133px" width="70" height="16">
<defs><linearGradient id="g2" x1="0" y1="0" x2="0" y2="1"><stop offset="0" stop-color="#f0f0f0"/><stop offset="1" stop-color="#999"/></linearGradient></defs>
<rect x="0.5" y="3.5" width="10" height="10" fill="url(#g2)" stroke="#555"/>
<rect x="17.5" y="0.5" width="9" height="9" fill="url(#g2)" stroke="#555"/><rect x="20.5" y="4.5" width="9" height="9" fill="url(#g2)" stroke="#555"/>
<rect x="36.5" y="0.5" width="9" height="9" fill="#eee" stroke="#555"/><rect x="39.5" y="4.5" width="9" height="9" fill="#e0e0e0" stroke="#bbb"/>
<rect x="53.5" y="0.5" width="9" height="9" fill="#eee" stroke="#555"/><rect x="56.5" y="4.5" width="9" height="9" fill="#ddd" stroke="#555"/><rect x="56.5" y="4.5" width="6" height="5" fill="#111"/>
</svg>
<div class="a" style="left:458px;top:131px;width:1px;height:23px;background:#888"></div>
<div class="t ps" style="left:469px;top:133.5px;font-size:10.9px">Contour progr. :</div>
<div class="a" style="left:548px;top:131px;width:41px;height:17px;background:#fff;border:1px solid #aaa"></div>
<div class="t ps" style="left:553px;top:134px;font-size:10.3px">0 px</div>
<div class="a" style="left:597px;top:133px;width:12px;height:12px;background:#e8e8e8;border:1px solid #bbb"></div>
<div class="t ps" style="left:612px;top:134px;font-size:9.2px;color:#a8a8a8">Lissage</div>
<div class="a" style="left:652px;top:130px;width:1px;height:24px;background:#888"></div>
<div class="t ps" style="left:662px;top:134px;font-size:10px">Style :</div>
<div class="a" style="left:695px;top:132px;width:73px;height:18px;background:#fff;border:1px solid #999"></div>
<div class="t ps" style="left:699px;top:134.5px;font-size:10.1px">Normal</div>
<svg style="left:756px;top:138px" width="9" height="7"><path d="M1 1L4.5 5L8 1" fill="none" stroke="#222" stroke-width="1.4"/></svg>
<div class="t ps" style="left:779px;top:133.5px;font-size:10px;color:#b0b0b0">L :</div>
<div class="a" style="left:793px;top:132px;width:40px;height:16px;background:#d6d6d6;border:1px solid #f0f0f0;box-shadow:inset 1px 1px #c8c8c8"></div>
<svg style="left:848px;top:134px" width="13" height="12"><path d="M0 3.5H11M8 0.5L11 3.5L8 6.5M13 8.5H2M5 5.5L2 8.5L5 11.5" fill="none" stroke="#999" stroke-width="1.3"/></svg>
<div class="t ps" style="left:873px;top:133.5px;font-size:10px;color:#b0b0b0">H :</div>
<div class="a" style="left:887px;top:132px;width:40px;height:16px;background:#d6d6d6;border:1px solid #f0f0f0;box-shadow:inset 1px 1px #c8c8c8"></div>
<div class="a" style="left:936px;top:130px;width:1px;height:24px;background:#888"></div>
<div class="a" style="left:947px;top:130px;width:101px;height:22px;background:#e4e4e4"></div>
<div class="a" style="left:947px;top:130px;width:101px;height:22px;overflow:hidden"><div class="t ps" style="left:10px;top:4px;font-size:10.6px;color:#8a8a8a">Améliorer le contour</div></div>
<div class="a" style="left:1048px;top:124px;width:4px;height:34px;background:#d6d6d6"></div>

<!-- tools panel -->
<div class="a" style="left:315px;top:157px;width:422px;height:1px;background:#555"></div>
<div class="a" style="left:315px;top:158px;width:36px;height:12px;background:linear-gradient(#555,#2e2e2e)"></div>
<svg style="left:319px;top:161px" width="9" height="6"><path d="M0 0L3.5 3L0 6ZM5 0L8.5 3L5 6Z" fill="#ddd"/></svg>
<div class="a" style="left:315px;top:170px;width:36px;height:551px;background:#d6d6d6;border-left:1px solid #aaa;border-right:1px solid #aaa"></div>
<svg style="left:320px;top:175px" width="26" height="3"><g fill="#aaa"><rect x="0" y="0" width="1" height="1"/><rect x="2" y="0" width="1" height="1"/><rect x="4" y="0" width="1" height="1"/><rect x="6" y="0" width="1" height="1"/><rect x="8" y="0" width="1" height="1"/><rect x="10" y="0" width="1" height="1"/><rect x="12" y="0" width="1" height="1"/><rect x="14" y="0" width="1" height="1"/><rect x="16" y="0" width="1" height="1"/><rect x="18" y="0" width="1" height="1"/><rect x="20" y="0" width="1" height="1"/><rect x="22" y="0" width="1" height="1"/><rect x="24" y="0" width="1" height="1"/><rect x="1" y="2" width="1" height="1"/><rect x="3" y="2" width="1" height="1"/><rect x="5" y="2" width="1" height="1"/><rect x="7" y="2" width="1" height="1"/><rect x="9" y="2" width="1" height="1"/><rect x="11" y="2" width="1" height="1"/><rect x="13" y="2" width="1" height="1"/><rect x="15" y="2" width="1" height="1"/><rect x="17" y="2" width="1" height="1"/><rect x="19" y="2" width="1" height="1"/><rect x="21" y="2" width="1" height="1"/><rect x="23" y="2" width="1" height="1"/></g></svg>
<div class="a" style="left:320px;top:206px;width:25px;height:23px;background:#a9c8e8;border:1px solid #6a9bd0"></div>
<svg style="left:315px;top:180px" width="36" height="541">
<defs><linearGradient id="tg" x1="0" y1="0" x2="0" y2="1"><stop offset="0" stop-color="#777"/><stop offset="1" stop-color="#333"/></linearGradient>
<linearGradient id="tg2" x1="0" y1="0" x2="1" y2="0"><stop offset="0" stop-color="#222"/><stop offset="1" stop-color="#eee"/></linearGradient></defs>
<g fill="#111">
<!-- corner triangles --><path d="M30 48V44L26 48Z"/><path d="M30 70V66L26 70Z"/><path d="M30 91V87L26 91Z"/><path d="M30 114V110L26 114Z"/><path d="M30 138V134L26 138Z"/><path d="M30 164V160L26 164Z"/><path d="M30 188V184L26 188Z"/><path d="M30 211V207L26 211Z"/><path d="M30 233V229L26 233Z"/><path d="M30 257V253L26 257Z"/><path d="M30 280V276L26 280Z"/><path d="M30 303V299L26 303Z"/><path d="M30 326V322L26 326Z"/><path d="M30 352V348L26 352Z"/><path d="M30 375V371L26 375Z"/><path d="M30 398V394L26 398Z"/><path d="M30 421V417L26 421Z"/><path d="M30 447V443L26 447Z"/>
<!-- move -->
<path d="M10 6V19L17 12.5Z"/>
</g>
<path d="M23 12V22M18 17H28" stroke="#111" stroke-width="1.3"/><path d="M23 11L21 13.5H25ZM23 23L21 20.5H25ZM17 17L19.5 15V19ZM29 17L26.5 15V19Z" fill="#111"/>
<!-- marquee -->
<rect x="12.5" y="31.5" width="14" height="12" fill="none" stroke="#222" stroke-width="1.3" stroke-dasharray="3 2"/>
<!-- lasso -->
<ellipse cx="19" cy="58" rx="8" ry="5" fill="none" stroke="#333" stroke-width="1.6" transform="rotate(-10 19 58)"/><path d="M12 61C10 64 12 67 14 66" fill="none" stroke="#333" stroke-width="1.4"/>
<!-- quick selection -->
<circle cx="17" cy="85" r="5.5" fill="none" stroke="#222" stroke-width="1.2" stroke-dasharray="1.2 1.2"/><path d="M28 76L19 85C16 88 15 90 14 92C18 91 21 89 22 86L29 78Z" fill="#333"/>
<!-- crop -->
<path d="M13 100V116H29M10 103H26V119" fill="none" stroke="#333" stroke-width="2.6"/><path d="M12 117L29 100" stroke="#333" stroke-width="1"/>
<!-- eyedropper -->
<path d="M27 122L30 125L26 129L23 126Z" fill="#333"/><path d="M24 127L14 137L12 140L15 138L25 128" fill="#fff" stroke="#333" stroke-width="1.4"/>
<rect x="5" y="142" width="26" height="1" fill="#999"/>
<!-- healing -->
<circle cx="15" cy="154" r="6" fill="none" stroke="#222" stroke-width="1.1" stroke-dasharray="1.2 1.2"/><path d="M13 161L25 149C27 147 30 150 28 152L16 164C14 166 11 163 13 161Z" fill="#555"/><circle cx="20" cy="157" r="1" fill="#ccc"/>
<!-- brush -->
<path d="M28 172L19 181" stroke="#333" stroke-width="2"/><path d="M19 180C15 180 12 183 11 188C15 188 19 186 21 182Z" fill="#333"/>
<!-- stamp -->
<circle cx="21" cy="198" r="2.6" fill="#333"/><rect x="20" y="200" width="2.5" height="5" fill="#333"/><rect x="11" y="205" width="20" height="5" fill="url(#tg)"/><rect x="11" y="210" width="20" height="1.5" fill="#222"/>
<!-- history brush -->
<path d="M27 218L19 227" stroke="#333" stroke-width="2"/><path d="M19 226C15 226 13 229 12 233C16 233 19 231 21 228Z" fill="#333"/><path d="M22 222C18 219 13 220 12 224M12 224L11 221M12 224L15 224" fill="none" stroke="#333" stroke-width="1.2"/>
<!-- eraser -->
<path d="M11 250L18 243H29L22 250Z" fill="#999"/><path d="M11 250H22V255H11Z" fill="#444"/><path d="M22 250L29 243V248L22 255Z" fill="#666"/>
<!-- gradient -->
<rect x="11.5" y="266.5" width="17" height="13" fill="url(#tg2)" stroke="#333"/>
<!-- drop -->
<path d="M19 286C17 290 14 293 14 297C14 300 16 302 19 302C22 302 24 300 24 297C24 293 21 290 19 286Z" fill="#999" stroke="#444" stroke-width="0.8"/>
<!-- dodge -->
<circle cx="17" cy="313" r="5" fill="#222"/><path d="M20 316L28 324" stroke="#222" stroke-width="2"/>
<rect x="5" y="330" width="26" height="1" fill="#999"/>
<!-- pen -->
<path d="M26 336L29 339L22 346L13 351L17 342Z" fill="#eee" stroke="#222" stroke-width="1.3"/><path d="M13 351L19 344" stroke="#222" stroke-width="0.8"/>
<!-- type -->
<path d="M12 360H27V364H26L25 362H21V374H23V375H16V374H18V362H14L13 364H12Z" fill="#222"/>
<!-- path select -->
<path d="M15 382V396L18.5 392.5L21 398L23 397L20.5 391.5H25Z" fill="#222"/>
<!-- rect -->
<rect x="11.5" y="406.5" width="16" height="13" fill="#aaa" stroke="#333"/>
<rect x="5" y="424" width="26" height="1" fill="#999"/>
<!-- hand -->
<g stroke="#333" stroke-width="1" fill="#fff">
<rect x="12.5" y="433.5" width="3" height="10" rx="1.5"/><rect x="15.5" y="431.5" width="3" height="11" rx="1.5"/><rect x="18.5" y="432" width="3" height="11" rx="1.5"/><rect x="21.5" y="434" width="3" height="10" rx="1.5"/>
<path d="M12.5 440L10.5 437.5C9.5 436.5 8 437.5 8.8 438.8L12 444.5C13 446.5 14.5 447.5 17 447.5H20C23 447.5 24.5 445.5 24.5 442.5V440Z"/>
</g>
<rect x="13" y="439" width="11" height="4" fill="#fff"/>
<!-- zoom -->
<circle cx="17" cy="461" r="5.5" fill="#ddd" stroke="#333" stroke-width="1.4"/><path d="M21 465L27 471" stroke="#222" stroke-width="2.2"/>
<!-- default colors -->
<rect x="3.5" y="479.5" width="6" height="6" fill="#111" stroke="#fff" stroke-width="0.8"/><rect x="7" y="483" width="5" height="5" fill="#fff" stroke="#111" stroke-width="0.8"/>
<path d="M23 482C27 482 29 484 29 488M23 482L25 480M23 482L25 484M29 488L27 486M29 488L31 486" fill="none" stroke="#222" stroke-width="1.1"/>
<rect x="13" y="505" width="20" height="20" fill="#fff"/>
<rect x="3" y="495" width="21" height="21" fill="#000" stroke="#fff" stroke-width="1"/>
<rect x="5.5" y="532.5" width="16" height="12" fill="#eee" stroke="#333"/><circle cx="13.5" cy="539" r="3.5" fill="none" stroke="#333"/>
</svg>


<!-- document -->
<div class="a" style="left:352px;top:158px;width:385px;height:20px;background:linear-gradient(#9a9a9a,#888)"></div>
<div class="a" style="left:352px;top:177px;width:385px;height:1px;background:#444"></div>
<div class="a" style="left:352px;top:158px;width:183px;height:19px;background:#e6e6e6"></div>
<div class="t ps" style="left:361px;top:162px;font-size:11.2px">Sans titre-1 @ 66,7% (RVB/8)</div>
<div class="a" style="left:517px;top:162px;width:12px;height:11px;border:1px solid #888;background:#ddd"></div>
<svg style="left:520px;top:164px" width="8" height="8"><path d="M0.5 0.5L7 7M7 0.5L0.5 7" stroke="#555" stroke-width="1.2"/></svg>
<div class="a" style="left:352px;top:178px;width:370px;height:525px;background:#bfbfbf"></div>
<div class="a" style="left:722px;top:178px;width:15px;height:525px;background:#f0f0f0"></div>
<svg style="left:725px;top:184px" width="10" height="6"><path d="M1 5L5 1L9 5" fill="none" stroke="#bbb" stroke-width="1.4"/></svg>
<svg style="left:725px;top:690px" width="10" height="6"><path d="M1 1L5 5L9 1" fill="none" stroke="#bbb" stroke-width="1.4"/></svg>
<div class="a" style="left:387px;top:329px;width:303px;height:227px;background:#8a8a8a;filter:blur(1.5px)"></div>
<div class="a" style="left:385px;top:327px;width:303px;height:227px;background:#fff"></div>
<!-- status bar -->
<div class="a" style="left:352px;top:703px;width:385px;height:18px;background:#d6d6d6;border-top:1px solid #bbb"></div>
<div class="a" style="left:353px;top:704px;width:46px;height:16px;background:#fff"></div>
<div class="t ps" style="left:357px;top:704.5px;font-size:10.2px">66,67 %</div>
<div class="a" style="left:400px;top:704px;width:1px;height:16px;background:#bbb"></div>
<svg style="left:404px;top:705px" width="14" height="14"><circle cx="7" cy="7" r="6" fill="#ccc" stroke="#888"/><path d="M4 4H8L10 6V10H4Z" fill="none" stroke="#666"/></svg>
<div class="a" style="left:421px;top:704px;width:1px;height:16px;background:#bbb"></div>
<div class="t ps" style="left:455px;top:704.5px;font-size:10.1px">Doc : 452,2 Ko/0 octets</div>
<div class="a" style="left:592px;top:704px;width:1px;height:16px;background:#bbb"></div>
<svg style="left:596px;top:706px" width="7" height="11"><path d="M0 0L7 5.5L0 11Z" fill="#111"/></svg>
<div class="a" style="left:606px;top:704px;width:116px;height:16px;background:#f0f0f0"></div>
<svg style="left:614px;top:708px" width="6" height="9"><path d="M5 1L1 4.5L5 8" fill="none" stroke="#bbb" stroke-width="1.2"/></svg>
<svg style="left:709px;top:708px" width="6" height="9"><path d="M1 1L5 4.5L1 8" fill="none" stroke="#bbb" stroke-width="1.2"/></svg>
<div class="a" style="left:722px;top:704px;width:15px;height:16px;background:#d6d6d6"></div>

<!-- icon column -->
<div class="a" style="left:737px;top:158px;width:1px;height:563px;background:#555"></div>
<div class="a" style="left:738px;top:158px;width:310px;height:12px;background:linear-gradient(#555,#2e2e2e)"></div>
<svg style="left:762px;top:161px" width="9" height="6"><path d="M3.5 0L0 3L3.5 6ZM8.5 0L5 3L8.5 6Z" fill="#ddd"/></svg>
<svg style="left:1036px;top:161px" width="9" height="6"><path d="M0 0L3.5 3L0 6ZM5 0L8.5 3L5 6Z" fill="#ddd"/></svg>
<div class="a" style="left:738px;top:170px;width:36px;height:551px;background:#6a6a6a"></div>
<div class="a" style="left:738px;top:170px;width:35px;height:370px;background:#d6d6d6"></div>
<div class="a" style="left:738px;top:213px;width:35px;height:1px;background:#8a8a8a"></div>
<div class="a" style="left:738px;top:258px;width:35px;height:1px;background:#8a8a8a"></div>
<div class="a" style="left:738px;top:362px;width:35px;height:1px;background:#8a8a8a"></div>
<div class="a" style="left:738px;top:465px;width:35px;height:1px;background:#8a8a8a"></div>
<div class="a" style="left:738px;top:540px;width:35px;height:1px;background:#8a8a8a"></div>
<div class="a" style="left:773px;top:170px;width:1px;height:551px;background:#8a8a8a"></div>
<svg style="left:738px;top:170px" width="35" height="370">
<!-- Mb -->
<path d="M9.5 30.5V17.5H15L16.5 19.5H26.5V30.5Z" fill="#ddd" stroke="#333"/>
<text x="10.5" y="28.5" font-family="Liberation Sans" font-size="8.5" font-weight="bold" fill="#222">Mb</text>
<!-- history -->
<rect x="10.5" y="59.5" width="5" height="5" fill="#fff" stroke="#333"/><rect x="10.5" y="66.5" width="5" height="5" fill="#fff" stroke="#333"/><rect x="10" y="73" width="6" height="6" fill="#555"/>
<path d="M19 62L22 59L24 62M22 59C27 61 27 70 21 75" fill="none" stroke="#333" stroke-width="2"/>
<!-- navigator wheel -->
<circle cx="17.5" cy="113" r="6" fill="none" stroke="#222" stroke-width="1.4"/><path d="M17.5 104V122M8.5 113H26.5M11 106.5L24 119.5M24 106.5L11 119.5" stroke="#222" stroke-width="1.2"/><circle cx="17.5" cy="113" r="2" fill="#222"/>
<!-- histogram -->
<rect x="9.5" y="135.5" width="17" height="13" fill="#fff" stroke="#555"/><path d="M10 148L12 142L14 144L16 138L18 141L20 139L22 143L24 141L26 148Z" fill="#222"/>
<!-- info -->
<circle cx="17.5" cy="173" r="8" fill="#333"/><circle cx="17.5" cy="168.5" r="1.5" fill="#fff"/><rect x="16" y="171" width="3" height="7" fill="#fff"/>
<!-- adjust -->
<path d="M9 215H26M9 220H26" stroke="#333" stroke-width="1.6"/><circle cx="13" cy="215" r="2.5" fill="#333"/><circle cx="22" cy="220" r="3" fill="#333"/>
<!-- brushes -->
<rect x="13" y="243" width="8" height="8" fill="#fff" stroke="#222"/><path d="M14 243L12 235M17 243V233M20 243L23 236" stroke="#222" stroke-width="1.6"/>
<!-- clone source -->
<path d="M10 272H14M10 275H14M10 278H14" stroke="#333"/><path d="M16 272H21M16 275H20" stroke="#333"/><circle cx="20" cy="278" r="2" fill="#333"/><rect x="12" y="281" width="15" height="3" fill="#555"/><rect x="12" y="284" width="15" height="1" fill="#222"/>
<!-- character -->
<path d="M10 328L15 316L20 328M12 324H18" fill="none" stroke="#333" stroke-width="1.6"/><path d="M22 314V330" stroke="#222" stroke-width="1"/>
<!-- paragraph -->
<path d="M19 345V359M22 345V359" stroke="#333" stroke-width="1.6"/><path d="M19 345H17C14 345 13 347 13 349C13 351 14 353 17 353H19Z" fill="#333"/><path d="M15 345H23" stroke="#333" stroke-width="1.4"/>
</svg>


<svg style="left:0;top:0" width="1357" height="721"><g fill="#999"><rect x="744" y="175" width="1" height="1"/><rect x="744" y="177" width="1" height="1"/><rect x="746" y="175" width="1" height="1"/><rect x="746" y="177" width="1" height="1"/><rect x="748" y="175" width="1" height="1"/><rect x="748" y="177" width="1" height="1"/><rect x="750" y="175" width="1" height="1"/><rect x="750" y="177" width="1" height="1"/><rect x="752" y="175" width="1" height="1"/><rect x="752" y="177" width="1" height="1"/><rect x="754" y="175" width="1" height="1"/><rect x="754" y="177" width="1" height="1"/><rect x="756" y="175" width="1" height="1"/><rect x="756" y="177" width="1" height="1"/><rect x="758" y="175" width="1" height="1"/><rect x="758" y="177" width="1" height="1"/><rect x="760" y="175" width="1" height="1"/><rect x="760" y="177" width="1" height="1"/><rect x="762" y="175" width="1" height="1"/><rect x="762" y="177" width="1" height="1"/><rect x="764" y="175" width="1" height="1"/><rect x="764" y="177" width="1" height="1"/><rect x="744" y="219" width="1" height="1"/><rect x="744" y="221" width="1" height="1"/><rect x="746" y="219" width="1" height="1"/><rect x="746" y="221" width="1" height="1"/><rect x="748" y="219" width="1" height="1"/><rect x="748" y="221" width="1" height="1"/><rect x="750" y="219" width="1" height="1"/><rect x="750" y="221" width="1" height="1"/><rect x="752" y="219" width="1" height="1"/><rect x="752" y="221" width="1" height="1"/><rect x="754" y="219" width="1" height="1"/><rect x="754" y="221" width="1" height="1"/><rect x="756" y="219" width="1" height="1"/><rect x="756" y="221" width="1" height="1"/><rect x="758" y="219" width="1" height="1"/><rect x="758" y="221" width="1" height="1"/><rect x="760" y="219" width="1" height="1"/><rect x="760" y="221" width="1" height="1"/><rect x="762" y="219" width="1" height="1"/><rect x="762" y="221" width="1" height="1"/><rect x="764" y="219" width="1" height="1"/><rect x="764" y="221" width="1" height="1"/><rect x="744" y="264" width="1" height="1"/><rect x="744" y="266" width="1" height="1"/><rect x="746" y="264" width="1" height="1"/><rect x="746" y="266" width="1" height="1"/><rect x="748" y="264" width="1" height="1"/><rect x="748" y="266" width="1" height="1"/><rect x="750" y="264" width="1" height="1"/><rect x="750" y="266" width="1" height="1"/><rect x="752" y="264" width="1" height="1"/><rect x="752" y="266" width="1" height="1"/><rect x="754" y="264" width="1" height="1"/><rect x="754" y="266" width="1" height="1"/><rect x="756" y="264" width="1" height="1"/><rect x="756" y="266" width="1" height="1"/><rect x="758" y="264" width="1" height="1"/><rect x="758" y="266" width="1" height="1"/><rect x="760" y="264" width="1" height="1"/><rect x="760" y="266" width="1" height="1"/><rect x="762" y="264" width="1" height="1"/><rect x="762" y="266" width="1" height="1"/><rect x="764" y="264" width="1" height="1"/><rect x="764" y="266" width="1" height="1"/><rect x="744" y="368" width="1" height="1"/><rect x="744" y="370" width="1" height="1"/><rect x="746" y="368" width="1" height="1"/><rect x="746" y="370" width="1" height="1"/><rect x="748" y="368" width="1" height="1"/><rect x="748" y="370" width="1" height="1"/><rect x="750" y="368" width="1" height="1"/><rect x="750" y="370" width="1" height="1"/><rect x="752" y="368" width="1" height="1"/><rect x="752" y="370" width="1" height="1"/><rect x="754" y="368" width="1" height="1"/><rect x="754" y="370" width="1" height="1"/><rect x="756" y="368" width="1" height="1"/><rect x="756" y="370" width="1" height="1"/><rect x="758" y="368" width="1" height="1"/><rect x="758" y="370" width="1" height="1"/><rect x="760" y="368" width="1" height="1"/><rect x="760" y="370" width="1" height="1"/><rect x="762" y="368" width="1" height="1"/><rect x="762" y="370" width="1" height="1"/><rect x="764" y="368" width="1" height="1"/><rect x="764" y="370" width="1" height="1"/><rect x="744" y="471" width="1" height="1"/><rect x="744" y="473" width="1" height="1"/><rect x="746" y="471" width="1" height="1"/><rect x="746" y="473" width="1" height="1"/><rect x="748" y="471" width="1" height="1"/><rect x="748" y="473" width="1" height="1"/><rect x="750" y="471" width="1" height="1"/><rect x="750" y="473" width="1" height="1"/><rect x="752" y="471" width="1" height="1"/><rect x="752" y="473" width="1" height="1"/><rect x="754" y="471" width="1" height="1"/><rect x="754" y="473" width="1" height="1"/><rect x="756" y="471" width="1" height="1"/><rect x="756" y="473" width="1" height="1"/><rect x="758" y="471" width="1" height="1"/><rect x="758" y="473" width="1" height="1"/><rect x="760" y="471" width="1" height="1"/><rect x="760" y="473" width="1" height="1"/><rect x="762" y="471" width="1" height="1"/><rect x="762" y="473" width="1" height="1"/><rect x="764" y="471" width="1" height="1"/><rect x="764" y="473" width="1" height="1"/></g></svg>
<!-- swatches panel -->
<div class="a" style="left:774px;top:170px;width:274px;height:131px;background:#d6d6d6"></div>
<div class="a" style="left:774px;top:170px;width:274px;height:16px;background:linear-gradient(#a4a4a4,#8c8c8c);border-bottom:1px solid #4a4a4a"></div>
<div class="a" style="left:774px;top:170px;width:51px;height:16px;background:linear-gradient(#a4a4a4,#8c8c8c);border-right:1px solid #3a3a3a;border-bottom:1px solid #4a4a4a"></div>
<div class="a" style="left:825px;top:170px;width:58px;height:17px;background:linear-gradient(#e4e4e4,#d6d6d6);border-right:1px solid #3a3a3a"></div>
<div class="a" style="left:883px;top:170px;width:40px;height:16px;background:linear-gradient(#a4a4a4,#8c8c8c);border-right:1px solid #3a3a3a;border-bottom:1px solid #4a4a4a"></div>
<div class="t ps" style="left:781px;top:173px;font-size:10.2px;-webkit-text-stroke:0.15px #222">Couleur</div>
<div class="t ps" style="left:832px;top:173px;font-size:10.5px;-webkit-text-stroke:0.15px #222">Nuancier</div>
<div class="t ps" style="left:889px;top:173px;font-size:10px;-webkit-text-stroke:0.15px #222">Styles</div>
<svg style="left:1031px;top:173px" width="13" height="10"><path d="M0 3H4L2 5.5Z" fill="#333"/><path d="M5 1H13M5 3.5H13M5 6H13M5 8.5H13" stroke="#333" stroke-width="1"/></svg>
<div class="a" style="left:775px;top:187px;width:255px;height:97px;background:#d6d6d6"></div>
<svg style="left:775px;top:187px" width="254" height="74"><rect x="0" y="0" width="253" height="13" fill="#000"/><rect x="0" y="12" width="253" height="13" fill="#000"/><rect x="0" y="24" width="253" height="13" fill="#000"/><rect x="0" y="36" width="253" height="13" fill="#000"/><rect x="0" y="48" width="253" height="13" fill="#000"/><rect x="0" y="60" width="205" height="13" fill="#000"/><rect x="1" y="1" width="11" height="11" fill="#FF0000"/><rect x="13" y="1" width="11" height="11" fill="#FFFF00"/><rect x="25" y="1" width="11" height="11" fill="#00FF00"/><rect x="37" y="1" width="11" height="11" fill="#00FFFF"/><rect x="49" y="1" width="11" height="11" fill="#0000FF"/><rect x="61" y="1" width="11" height="11" fill="#FF00FF"/><rect x="73" y="1" width="11" height="11" fill="#FFFFFF"/><rect x="85" y="1" width="11" height="11" fill="#EBEBEB"/><rect x="97" y="1" width="11" height="11" fill="#DEDEDE"/><rect x="109" y="1" width="11" height="11" fill="#D0D0D0"/><rect x="121" y="1" width="11" height="11" fill="#C2C2C2"/><rect x="133" y="1" width="11" height="11" fill="#B4B4B4"/><rect x="145" y="1" width="11" height="11" fill="#A6A6A6"/><rect x="157" y="1" width="11" height="11" fill="#999999"/><rect x="169" y="1" width="11" height="11" fill="#8C8C8C"/><rect x="181" y="1" width="11" height="11" fill="#7D7D7D"/><rect x="193" y="1" width="11" height="11" fill="#ED1C24"/><rect x="205" y="1" width="11" height="11" fill="#FFF200"/><rect x="217" y="1" width="11" height="11" fill="#00A651"/><rect x="229" y="1" width="11" height="11" fill="#00AEEF"/><rect x="241" y="1" width="11" height="11" fill="#2E3192"/><rect x="1" y="13" width="11" height="11" fill="#EC008C"/><rect x="13" y="13" width="11" height="11" fill="#737373"/><rect x="25" y="13" width="11" height="11" fill="#666666"/><rect x="37" y="13" width="11" height="11" fill="#5A5A5A"/><rect x="49" y="13" width="11" height="11" fill="#4D4D4D"/><rect x="61" y="13" width="11" height="11" fill="#404040"/><rect x="73" y="13" width="11" height="11" fill="#333333"/><rect x="85" y="13" width="11" height="11" fill="#262626"/><rect x="97" y="13" width="11" height="11" fill="#1A1A1A"/><rect x="109" y="13" width="11" height="11" fill="#0D0D0D"/><rect x="121" y="13" width="11" height="11" fill="#000000"/><rect x="133" y="13" width="11" height="11" fill="#F7977A"/><rect x="145" y="13" width="11" height="11" fill="#F9AD81"/><rect x="157" y="13" width="11" height="11" fill="#FDC68A"/><rect x="169" y="13" width="11" height="11" fill="#FFF79A"/><rect x="181" y="13" width="11" height="11" fill="#C4DF9B"/><rect x="193" y="13" width="11" height="11" fill="#A3D39C"/><rect x="205" y="13" width="11" height="11" fill="#82CA9D"/><rect x="217" y="13" width="11" height="11" fill="#7BCDC8"/><rect x="229" y="13" width="11" height="11" fill="#6ECFF6"/><rect x="241" y="13" width="11" height="11" fill="#7EA7D8"/><rect x="1" y="25" width="11" height="11" fill="#8493CA"/><rect x="13" y="25" width="11" height="11" fill="#8882BE"/><rect x="25" y="25" width="11" height="11" fill="#A187BE"/><rect x="37" y="25" width="11" height="11" fill="#BC8CBF"/><rect x="49" y="25" width="11" height="11" fill="#F49AC2"/><rect x="61" y="25" width="11" height="11" fill="#F6989D"/><rect x="73" y="25" width="11" height="11" fill="#F26C4F"/><rect x="85" y="25" width="11" height="11" fill="#F68E56"/><rect x="97" y="25" width="11" height="11" fill="#FBAF5D"/><rect x="109" y="25" width="11" height="11" fill="#FFF467"/><rect x="121" y="25" width="11" height="11" fill="#ACD372"/><rect x="133" y="25" width="11" height="11" fill="#7ACC70"/><rect x="145" y="25" width="11" height="11" fill="#3BB878"/><rect x="157" y="25" width="11" height="11" fill="#1ABBB4"/><rect x="169" y="25" width="11" height="11" fill="#00BFF3"/><rect x="181" y="25" width="11" height="11" fill="#438CCA"/><rect x="193" y="25" width="11" height="11" fill="#5574B9"/><rect x="205" y="25" width="11" height="11" fill="#605CA8"/><rect x="217" y="25" width="11" height="11" fill="#855FA8"/><rect x="229" y="25" width="11" height="11" fill="#A763A8"/><rect x="241" y="25" width="11" height="11" fill="#F06EA9"/><rect x="1" y="37" width="11" height="11" fill="#F26D7D"/><rect x="13" y="37" width="11" height="11" fill="#ED1C24"/><rect x="25" y="37" width="11" height="11" fill="#F26522"/><rect x="37" y="37" width="11" height="11" fill="#F7941D"/><rect x="49" y="37" width="11" height="11" fill="#FFF200"/><rect x="61" y="37" width="11" height="11" fill="#8DC63F"/><rect x="73" y="37" width="11" height="11" fill="#39B54A"/><rect x="85" y="37" width="11" height="11" fill="#00A651"/><rect x="97" y="37" width="11" height="11" fill="#00A99D"/><rect x="109" y="37" width="11" height="11" fill="#00AEEF"/><rect x="121" y="37" width="11" height="11" fill="#0072BC"/><rect x="133" y="37" width="11" height="11" fill="#0054A6"/><rect x="145" y="37" width="11" height="11" fill="#2E3192"/><rect x="157" y="37" width="11" height="11" fill="#662D91"/><rect x="169" y="37" width="11" height="11" fill="#92278F"/><rect x="181" y="37" width="11" height="11" fill="#EC008C"/><rect x="193" y="37" width="11" height="11" fill="#ED145B"/><rect x="205" y="37" width="11" height="11" fill="#9E0B0F"/><rect x="217" y="37" width="11" height="11" fill="#A0410D"/><rect x="229" y="37" width="11" height="11" fill="#A36209"/><rect x="241" y="37" width="11" height="11" fill="#ABA000"/><rect x="1" y="49" width="11" height="11" fill="#598527"/><rect x="13" y="49" width="11" height="11" fill="#197B30"/><rect x="25" y="49" width="11" height="11" fill="#007236"/><rect x="37" y="49" width="11" height="11" fill="#00746B"/><rect x="49" y="49" width="11" height="11" fill="#0076A3"/><rect x="61" y="49" width="11" height="11" fill="#004B80"/><rect x="73" y="49" width="11" height="11" fill="#003471"/><rect x="85" y="49" width="11" height="11" fill="#1B1464"/><rect x="97" y="49" width="11" height="11" fill="#440E62"/><rect x="109" y="49" width="11" height="11" fill="#630460"/><rect x="121" y="49" width="11" height="11" fill="#9E005D"/><rect x="133" y="49" width="11" height="11" fill="#9E0039"/><rect x="145" y="49" width="11" height="11" fill="#790000"/><rect x="157" y="49" width="11" height="11" fill="#7B2E00"/><rect x="169" y="49" width="11" height="11" fill="#7D4900"/><rect x="181" y="49" width="11" height="11" fill="#827B00"/><rect x="193" y="49" width="11" height="11" fill="#406618"/><rect x="205" y="49" width="11" height="11" fill="#005E20"/><rect x="217" y="49" width="11" height="11" fill="#005826"/><rect x="229" y="49" width="11" height="11" fill="#005952"/><rect x="241" y="49" width="11" height="11" fill="#005B7F"/><rect x="1" y="61" width="11" height="11" fill="#003663"/><rect x="13" y="61" width="11" height="11" fill="#002157"/><rect x="25" y="61" width="11" height="11" fill="#0D004C"/><rect x="37" y="61" width="11" height="11" fill="#32004B"/><rect x="49" y="61" width="11" height="11" fill="#4B0049"/><rect x="61" y="61" width="11" height="11" fill="#7B0046"/><rect x="73" y="61" width="11" height="11" fill="#7A0026"/><rect x="85" y="61" width="11" height="11" fill="#C7B299"/><rect x="97" y="61" width="11" height="11" fill="#998675"/><rect x="109" y="61" width="11" height="11" fill="#736357"/><rect x="121" y="61" width="11" height="11" fill="#534741"/><rect x="133" y="61" width="11" height="11" fill="#37302A"/><rect x="145" y="61" width="11" height="11" fill="#C69C6D"/><rect x="157" y="61" width="11" height="11" fill="#A67C52"/><rect x="169" y="61" width="11" height="11" fill="#8C6239"/><rect x="181" y="61" width="11" height="11" fill="#754C24"/><rect x="193" y="61" width="11" height="11" fill="#603913"/></svg>
<div class="a" style="left:1030px;top:187px;width:15px;height:97px;background:#f0f0f0"></div>
<svg style="left:1033px;top:193px" width="10" height="6"><path d="M1 5L5 1L9 5" fill="none" stroke="#bbb" stroke-width="1.4"/></svg>
<svg style="left:1033px;top:272px" width="10" height="6"><path d="M1 1L5 5L9 1" fill="none" stroke="#bbb" stroke-width="1.4"/></svg>
<div class="a" style="left:776px;top:284px;width:254px;height:1px;background:#999"></div>
<svg style="left:985px;top:288px" width="10" height="10"><rect x="0.5" y="0.5" width="9" height="9" fill="#fff" stroke="#222"/><rect x="4" y="4" width="5" height="5" fill="#222"/></svg>
<svg style="left:1013px;top:287px" width="10" height="11"><path d="M1 2H9M3 1H7M2 3V10H8V3M4 4V9M6 4V9" fill="none" stroke="#444"/></svg>
<svg style="left:1036px;top:288px" width="9" height="9"><g fill="#888"><rect x="6" y="0" width="1" height="1"/><rect x="4" y="2" width="1" height="1"/><rect x="6" y="2" width="1" height="1"/><rect x="2" y="4" width="1" height="1"/><rect x="4" y="4" width="1" height="1"/><rect x="6" y="4" width="1" height="1"/><rect x="0" y="6" width="1" height="1"/><rect x="2" y="6" width="1" height="1"/><rect x="4" y="6" width="1" height="1"/><rect x="6" y="6" width="1" height="1"/></g></svg>
<div class="a" style="left:774px;top:301px;width:274px;height:3px;background:#333"></div>
<!-- reglages -->
<div class="a" style="left:774px;top:304px;width:274px;height:17px;background:linear-gradient(#a4a4a4,#8c8c8c);border-bottom:1px solid #4a4a4a"></div>
<div class="a" style="left:774px;top:304px;width:56px;height:18px;background:linear-gradient(#e4e4e4,#d6d6d6);border-right:1px solid #3a3a3a"></div>
<div class="a" style="left:830px;top:304px;width:55px;height:17px;background:linear-gradient(#a4a4a4,#8c8c8c);border-right:1px solid #3a3a3a;border-bottom:1px solid #4a4a4a"></div>
<div class="t ps" style="left:781px;top:306.5px;font-size:9.8px;-webkit-text-stroke:0.15px #222">Réglages</div>
<div class="t ps" style="left:836px;top:306.5px;font-size:9.9px;-webkit-text-stroke:0.15px #222">Masques</div>
<svg style="left:1031px;top:308px" width="13" height="10"><path d="M0 3H4L2 5.5Z" fill="#333"/><path d="M5 1H13M5 3.5H13M5 6H13M5 8.5H13" stroke="#333" stroke-width="1"/></svg>
<div class="a" style="left:774px;top:322px;width:274px;height:2px;background:#d6d6d6"></div>
<div class="a" style="left:774px;top:324px;width:274px;height:3px;background:#333"></div>
<!-- calques -->
<div class="a" style="left:774px;top:327px;width:274px;height:394px;background:#d6d6d6"></div>
<div class="a" style="left:774px;top:327px;width:274px;height:17px;background:linear-gradient(#a4a4a4,#8c8c8c);border-bottom:1px solid #4a4a4a"></div>
<div class="a" style="left:774px;top:327px;width:51px;height:18px;background:linear-gradient(#e4e4e4,#d6d6d6);border-right:1px solid #3a3a3a"></div>
<div class="a" style="left:825px;top:327px;width:53px;height:17px;background:linear-gradient(#a4a4a4,#8c8c8c);border-right:1px solid #3a3a3a;border-bottom:1px solid #4a4a4a"></div>
<div class="a" style="left:878px;top:327px;width:45px;height:17px;background:linear-gradient(#a4a4a4,#8c8c8c);border-right:1px solid #3a3a3a;border-bottom:1px solid #4a4a4a"></div>
<div class="t ps" style="left:781px;top:329.5px;font-size:9.6px;-webkit-text-stroke:0.15px #222">Calques</div>
<div class="t ps" style="left:831px;top:329.5px;font-size:9.9px;-webkit-text-stroke:0.15px #222">Couches</div>
<div class="t ps" style="left:885px;top:329.5px;font-size:9.7px;-webkit-text-stroke:0.15px #222">Tracés</div>
<svg style="left:1031px;top:331px" width="13" height="10"><path d="M0 3H4L2 5.5Z" fill="#333"/><path d="M5 1H13M5 3.5H13M5 6H13M5 8.5H13" stroke="#333" stroke-width="1"/></svg>
<div class="a" style="left:779px;top:348px;width:147px;height:17px;background:#fff;border:1px solid #ccc"></div>
<div class="a" style="left:926px;top:348px;width:17px;height:17px;background:#f0f0f0"></div>
<svg style="left:930px;top:355px" width="9" height="6"><path d="M1 1L4.5 5L8 1" fill="none" stroke="#888" stroke-width="1.3"/></svg>
<div class="t ps" style="left:782px;top:350.5px;font-size:10px;color:#444">Normal</div>
<div class="t ps" style="left:947px;top:350px;font-size:10.2px;color:#a8a8a8">Opacité :</div>
<div class="a" style="left:990px;top:347px;width:53px;height:18px;background:#eee;border:1px solid #bbb"></div>
<div class="a" style="left:992px;top:349px;width:34px;height:14px;background:#e0e0e0"></div>
<div class="a" style="left:1027px;top:348px;width:1px;height:16px;background:#bbb"></div>
<div class="t ps" style="left:996px;top:351px;font-size:9.6px;color:#333">100%</div>
<svg style="left:1033px;top:352px" width="4" height="7"><path d="M0 0L4 3.5L0 7Z" fill="#333"/></svg>
<div class="a" style="left:778px;top:368px;width:266px;height:1px;background:#bbb"></div>
<div class="t ps" style="left:782px;top:375.5px;font-size:10.3px;color:#a8a8a8">Verrou :</div>
<svg style="left:825px;top:375px" width="12" height="12"><rect x="0.5" y="0.5" width="11" height="11" fill="#eee" stroke="#999"/><rect x="2" y="2" width="4" height="4" fill="#ccc"/><rect x="6" y="6" width="4" height="4" fill="#ccc"/></svg>
<svg style="left:843px;top:374px" width="14" height="14"><path d="M13 1L6 8" stroke="#666" stroke-width="2"/><path d="M6 8C4 8 3 9 3 11C3 12 2 13 1 13C4 14 7 13 7 10Z" fill="#666"/></svg>
<svg style="left:861px;top:374px" width="13" height="13"><path d="M6.5 0V13M0 6.5H13" stroke="#444" stroke-width="1.2"/><path d="M6.5 0L4.5 2.5H8.5ZM6.5 13L4.5 10.5H8.5ZM0 6.5L2.5 4.5V8.5ZM13 6.5L10.5 4.5V8.5Z" fill="#444"/></svg>
<svg style="left:880px;top:375px" width="10" height="11"><path d="M2.5 5V3C2.5 0.5 7.5 0.5 7.5 3V5" fill="none" stroke="#777" stroke-width="1.2"/><rect x="1" y="5" width="8" height="6" fill="#888"/></svg>
<div class="t ps" style="left:957px;top:375.5px;font-size:10.9px;color:#a8a8a8">Fond :</div>
<div class="a" style="left:990px;top:373px;width:53px;height:18px;background:#eee;border:1px solid #bbb"></div>
<div class="a" style="left:992px;top:375px;width:34px;height:14px;background:#e0e0e0"></div>
<div class="a" style="left:1027px;top:374px;width:1px;height:16px;background:#bbb"></div>
<div class="t ps" style="left:996px;top:377px;font-size:9.6px;color:#333">100%</div>
<svg style="left:1033px;top:378px" width="4" height="7"><path d="M0 0L4 3.5L0 7Z" fill="#333"/></svg>
<div class="a" style="left:778px;top:394px;width:266px;height:1px;background:#aaa"></div>
<div class="a" style="left:778px;top:395px;width:252px;height:1px;background:#f4f4f4"></div>
<div class="a" style="left:799px;top:396px;width:231px;height:31px;background:#3399ff"></div>
<div class="a" style="left:779px;top:402px;width:16px;height:16px;background:#ccc;border:1px solid #f4f4f4"></div>
<svg style="left:780px;top:405px" width="13" height="8"><path d="M0.5 4C3 0 10 0 12.5 4C10 8 3 8 0.5 4Z" fill="#fff" stroke="#111"/><circle cx="6.5" cy="4" r="2.3" fill="#111"/></svg>
<div class="a" style="left:798px;top:396px;width:1px;height:31px;background:#bbb"></div>
<div class="a" style="left:802px;top:398px;width:32px;height:25px;background:#fff;border:1px solid #111"></div>
<div class="t ps" style="left:843px;top:405.5px;font-size:10.3px;color:#fff;font-style:italic">Arrière-plan</div>
<svg style="left:1005px;top:405px" width="10" height="11"><path d="M2.5 5V3C2.5 0.5 7.5 0.5 7.5 3V5" fill="none" stroke="#111" stroke-width="1.2"/><rect x="1" y="5" width="8" height="6" fill="#fff" stroke="#111"/></svg>
<div class="a" style="left:778px;top:427px;width:252px;height:1px;background:#aaa"></div>
<div class="a" style="left:1031px;top:396px;width:15px;height:304px;background:#f0f0f0"></div>
<svg style="left:1033px;top:403px" width="10" height="6"><path d="M1 5L5 1L9 5" fill="none" stroke="#bbb" stroke-width="1.4"/></svg>
<svg style="left:1033px;top:688px" width="10" height="6"><path d="M1 1L5 5L9 1" fill="none" stroke="#bbb" stroke-width="1.4"/></svg>
<div class="a" style="left:776px;top:700px;width:271px;height:1px;background:#999"></div>
<svg style="left:840px;top:700px" width="210" height="21">
<defs><linearGradient id="lg" x1="0" y1="0" x2="0" y2="1"><stop offset="0" stop-color="#fafafa"/><stop offset="1" stop-color="#aaa"/></linearGradient></defs>
<rect x="7.5" y="4.5" width="9" height="6" rx="3" fill="none" stroke="#555" stroke-width="1.6"/><rect x="14.5" y="4.5" width="9" height="6" rx="3" fill="none" stroke="#555" stroke-width="1.6"/>
<text x="36" y="12" font-family="Liberation Serif" font-style="italic" font-size="13" fill="#777">fx</text><path d="M49 12H52L50.5 13.5Z" fill="#777"/>
<rect x="63.5" y="2.5" width="13" height="11" fill="#bbb" stroke="#777"/><circle cx="70" cy="8" r="3.8" fill="#fff" stroke="#888" stroke-width="0.8"/>
<circle cx="97" cy="8" r="6" fill="#fff" stroke="#333" stroke-width="1.2"/><path d="M92.8 12.2A6 6 0 0 1 101.2 3.8Z" fill="#222"/><path d="M103 12H107L105 14.5Z" fill="#111"/>
<path d="M118.5 12.5V3.5H123L124 5H130.5V12.5Z" fill="url(#lg)" stroke="#333"/>
<rect x="146.5" y="3.5" width="10" height="10" fill="#fff" stroke="#111"/><rect x="151" y="8" width="5" height="5" fill="#222"/><rect x="147" y="4" width="4" height="4" fill="#888"/>
<path d="M173 5H183M176 3.5H180M174 6V13H182V6" fill="url(#lg)" stroke="#555"/><path d="M176.5 7V12M179.5 7V12" stroke="#555" stroke-width="0.8"/>
</svg>
<div class="a" style="left:315px;top:718px;width:734px;height:1px;background:#555"></div>
<div class="a" style="left:311px;top:719px;width:741px;height:2px;background:#e6e6e6"></div>
<div class="a" style="left:1048px;top:158px;width:4px;height:563px;background:#d6d6d6;border-right:1px solid #e8e8e8"></div>
<div class="a" style="left:1047px;top:158px;width:1px;height:561px;background:#555"></div><div class="a" style="left:1052px;top:67px;width:1px;height:654px;background:#6a8fb0"></div>

</body></html>
